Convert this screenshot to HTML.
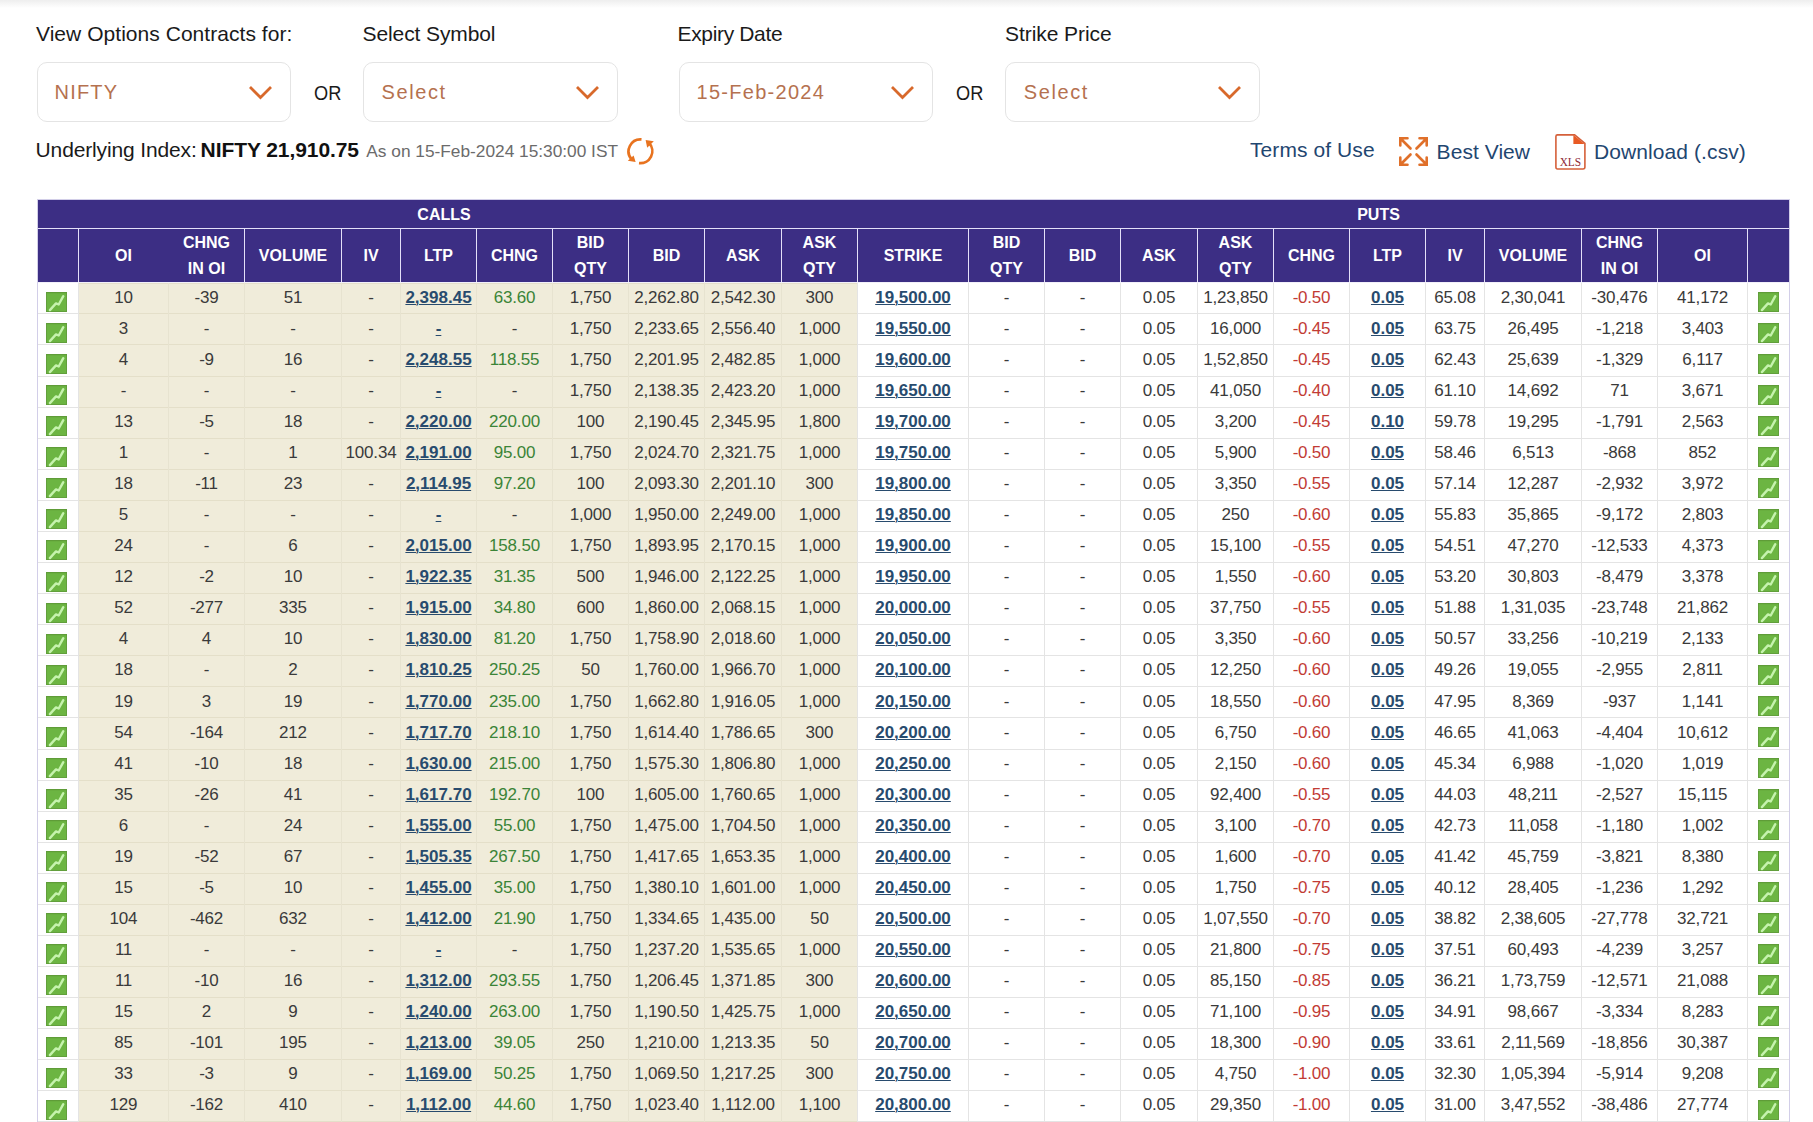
<!DOCTYPE html><html><head><meta charset="utf-8"><style>

html,body{margin:0;padding:0;background:#fff;}
body{width:1813px;height:1122px;overflow:hidden;position:relative;font-family:"Liberation Sans", sans-serif;color:#3a3a3a;}
.a{position:absolute;white-space:nowrap;}
.lbl{font-size:20px;color:#1a1a1a;line-height:24px;}
.sel{position:absolute;top:62px;width:254.5px;height:60px;box-sizing:border-box;border:1px solid #e4e4e4;border-radius:10px;background:#fff;}
.selt{position:absolute;left:18px;top:17px;font-size:21px;line-height:24px;color:#b86a45;}
.chev{position:absolute;top:24px;width:22px;height:14px;}
.c{position:absolute;text-align:center;font-size:17px;line-height:30px;white-space:nowrap;overflow:visible;letter-spacing:-0.2px;}
.h{position:absolute;text-align:center;font-size:16px;font-weight:bold;color:#fff;white-space:nowrap;line-height:26px;}
.lk{letter-spacing:0;color:#284b6e;font-weight:bold;text-decoration:underline;text-underline-offset:0.8px;text-decoration-thickness:1.2px;}
.g{color:#3b8437;}
.r{color:#c23b35;}
.ln{position:absolute;}

</style></head><body>
<div class="a" style="left:0;top:0;width:1813px;height:8px;background:linear-gradient(#eeeeee,#ffffff);"></div>
<div class="a" style="left:36px;top:22.2px;font-size:21px;line-height:24px;letter-spacing:0.04px;color:#1a1a1a;font-weight:normal;">View Options Contracts for:</div>
<div class="a" style="left:362.5px;top:22.2px;font-size:21px;line-height:24px;letter-spacing:-0.1px;color:#1a1a1a;font-weight:normal;">Select Symbol</div>
<div class="a" style="left:677.5px;top:22.2px;font-size:21px;line-height:24px;letter-spacing:-0.34px;color:#1a1a1a;font-weight:normal;">Expiry Date</div>
<div class="a" style="left:1005px;top:22.2px;font-size:21px;line-height:24px;letter-spacing:-0.06px;color:#1a1a1a;font-weight:normal;">Strike Price</div>
<div class="sel" style="left:36.5px;"></div>
<div class="a" style="left:54.6px;top:79.7px;font-size:20px;line-height:24px;letter-spacing:1.15px;color:#b5714f;font-weight:normal;">NIFTY</div>
<div class="a" style="left:246.0px;top:83.3px;width:30px;height:20px;"><svg width="30" height="20" viewBox="0 0 30 20"><polyline points="4,4 14.5,14.5 25,4" fill="none" stroke="#d8692b" stroke-width="2.8" stroke-linecap="butt" stroke-linejoin="miter"/></svg></div>
<div class="sel" style="left:363px;"></div>
<div class="a" style="left:381.5px;top:79.7px;font-size:20px;line-height:24px;letter-spacing:1.6px;color:#b5714f;font-weight:normal;">Select</div>
<div class="a" style="left:572.5px;top:83.3px;width:30px;height:20px;"><svg width="30" height="20" viewBox="0 0 30 20"><polyline points="4,4 14.5,14.5 25,4" fill="none" stroke="#d8692b" stroke-width="2.8" stroke-linecap="butt" stroke-linejoin="miter"/></svg></div>
<div class="sel" style="left:678.5px;"></div>
<div class="a" style="left:696.5px;top:79.7px;font-size:20px;line-height:24px;letter-spacing:1.28px;color:#b5714f;font-weight:normal;">15-Feb-2024</div>
<div class="a" style="left:888.0px;top:83.3px;width:30px;height:20px;"><svg width="30" height="20" viewBox="0 0 30 20"><polyline points="4,4 14.5,14.5 25,4" fill="none" stroke="#d8692b" stroke-width="2.8" stroke-linecap="butt" stroke-linejoin="miter"/></svg></div>
<div class="sel" style="left:1005px;"></div>
<div class="a" style="left:1023.8px;top:79.7px;font-size:20px;line-height:24px;letter-spacing:1.6px;color:#b5714f;font-weight:normal;">Select</div>
<div class="a" style="left:1214.5px;top:83.3px;width:30px;height:20px;"><svg width="30" height="20" viewBox="0 0 30 20"><polyline points="4,4 14.5,14.5 25,4" fill="none" stroke="#d8692b" stroke-width="2.8" stroke-linecap="butt" stroke-linejoin="miter"/></svg></div>
<div class="a" style="left:313.5px;top:81px;font-size:20px;line-height:24px;letter-spacing:0px;color:#1a1a1a;font-weight:normal;transform:scaleX(0.91);transform-origin:0 0;">OR</div>
<div class="a" style="left:956px;top:81px;font-size:20px;line-height:24px;letter-spacing:0px;color:#1a1a1a;font-weight:normal;transform:scaleX(0.91);transform-origin:0 0;">OR</div>
<div class="a" style="left:35.6px;top:138px;font-size:21px;line-height:24px;letter-spacing:-0.14px;color:#1a1a1a;font-weight:normal;">Underlying Index:</div>
<div class="a" style="left:200.6px;top:138px;font-size:21px;line-height:24px;letter-spacing:-0.08px;color:#111;font-weight:bold;">NIFTY 21,910.75</div>
<div class="a" style="left:366.3px;top:138.9px;font-size:17.3px;line-height:24px;letter-spacing:0px;color:#6b6b6b;font-weight:normal;">As on 15-Feb-2024 15:30:00 IST</div>
<svg class="a" style="left:627px;top:138px;" width="28" height="28" viewBox="0 0 28 28">
<g fill="none" stroke="#e8731f" stroke-width="2.7">
<path d="M14.5 1.4 A12 12 0 0 0 4.6 21.3"/>
<path d="M12 25.1 A12 12 0 0 0 22.1 5"/>
</g>
<polygon points="0.8,22.8 8.6,24 6.6,17.4" fill="#e8731f"/>
<polygon points="18.6,2 26.8,3.2 20.2,9.8" fill="#e8731f"/>
</svg>
<div class="a" style="left:1250px;top:137.5px;font-size:21px;line-height:24px;letter-spacing:0.08px;color:#1f4670;font-weight:normal;">Terms of Use</div>
<svg class="a" style="left:1399.4px;top:137.4px;" width="29" height="29" viewBox="0 0 29 29" fill="none" stroke="#e0702a" stroke-width="2.6" stroke-linecap="round">
<path d="M1.3 8.5 V1.3 H8.5"/><path d="M2.5 2.5 L11.5 11.5"/>
<path d="M20.5 1.3 H27.7 V8.5"/><path d="M26.5 2.5 L17.5 11.5"/>
<path d="M1.3 20.5 V27.7 H8.5"/><path d="M2.5 26.5 L11.5 17.5"/>
<path d="M20.5 27.7 H27.7 V20.5"/><path d="M26.5 26.5 L17.5 17.5"/>
<g fill="#e0702a" stroke="none"><polygon points="0,0 7,0 0,7"/><polygon points="29,0 22,0 29,7"/><polygon points="0,29 7,29 0,22"/><polygon points="29,29 22,29 29,22"/></g>
</svg>
<div class="a" style="left:1436.6px;top:139.9px;font-size:21px;line-height:24px;letter-spacing:0.05px;color:#1f4670;font-weight:normal;">Best View</div>
<svg class="a" style="left:1555px;top:134px;" width="31" height="36" viewBox="0 0 31 36">
<path d="M2.5 0.9 H19.6 L29.9 9.4 V33 Q29.9 35 28 35 H2.5 Q0.9 35 0.9 33 V2.5 Q0.9 0.9 2.5 0.9 Z" fill="#fff" stroke="#d5603a" stroke-width="1.6"/>
<path d="M18.4 1 V10 H29.6 Z" fill="#e85a24"/>
<text x="15.4" y="32" font-family="Liberation Serif" font-size="12" fill="#8e2a36" text-anchor="middle" textLength="21.5" lengthAdjust="spacingAndGlyphs">XLS</text>
</svg>
<div class="a" style="left:1593.9px;top:140.1px;font-size:21px;line-height:24px;letter-spacing:0.1px;color:#1f4670;font-weight:normal;">Download (.csv)</div>
<div class="a" style="left:37px;top:199px;width:1753px;height:923px;box-sizing:border-box;border:1px solid #d2cee8;border-bottom:none;"></div>
<div class="a" style="left:38px;top:200px;width:1751px;height:82px;background:#3c2e84;"></div>
<div class="a" style="left:38px;top:228px;width:1751px;height:1px;background:#e4e0f8;"></div>
<div class="a" style="left:38px;top:282px;width:1751px;height:1px;background:#f2f0fa;"></div>
<div class="a" style="left:78px;top:229px;width:1px;height:53px;background:#e4e0f8;"></div>
<div class="a" style="left:244px;top:229px;width:1px;height:53px;background:#e4e0f8;"></div>
<div class="a" style="left:341px;top:229px;width:1px;height:53px;background:#e4e0f8;"></div>
<div class="a" style="left:400px;top:229px;width:1px;height:53px;background:#e4e0f8;"></div>
<div class="a" style="left:476px;top:229px;width:1px;height:53px;background:#e4e0f8;"></div>
<div class="a" style="left:552px;top:229px;width:1px;height:53px;background:#e4e0f8;"></div>
<div class="a" style="left:628px;top:229px;width:1px;height:53px;background:#e4e0f8;"></div>
<div class="a" style="left:704px;top:229px;width:1px;height:53px;background:#e4e0f8;"></div>
<div class="a" style="left:781px;top:229px;width:1px;height:53px;background:#e4e0f8;"></div>
<div class="a" style="left:857px;top:229px;width:1px;height:53px;background:#e4e0f8;"></div>
<div class="a" style="left:968px;top:229px;width:1px;height:53px;background:#e4e0f8;"></div>
<div class="a" style="left:1044px;top:229px;width:1px;height:53px;background:#e4e0f8;"></div>
<div class="a" style="left:1120px;top:229px;width:1px;height:53px;background:#e4e0f8;"></div>
<div class="a" style="left:1197px;top:229px;width:1px;height:53px;background:#e4e0f8;"></div>
<div class="a" style="left:1273px;top:229px;width:1px;height:53px;background:#e4e0f8;"></div>
<div class="a" style="left:1349px;top:229px;width:1px;height:53px;background:#e4e0f8;"></div>
<div class="a" style="left:1425px;top:229px;width:1px;height:53px;background:#e4e0f8;"></div>
<div class="a" style="left:1484px;top:229px;width:1px;height:53px;background:#e4e0f8;"></div>
<div class="a" style="left:1581px;top:229px;width:1px;height:53px;background:#e4e0f8;"></div>
<div class="a" style="left:1657px;top:229px;width:1px;height:53px;background:#e4e0f8;"></div>
<div class="a" style="left:1747px;top:229px;width:1px;height:53px;background:#e4e0f8;"></div>
<div class="h" style="left:34px;width:820px;top:200.5px;line-height:28px;">CALLS</div>
<div class="h" style="left:968px;width:821px;top:200.5px;line-height:28px;">PUTS</div>
<div class="h" style="left:79px;width:89px;top:229px;line-height:53px;">OI</div>
<div class="h" style="left:169px;width:75px;top:230px;">CHNG<br>IN OI</div>
<div class="h" style="left:245px;width:96px;top:229px;line-height:53px;">VOLUME</div>
<div class="h" style="left:342px;width:58px;top:229px;line-height:53px;">IV</div>
<div class="h" style="left:401px;width:75px;top:229px;line-height:53px;">LTP</div>
<div class="h" style="left:477px;width:75px;top:229px;line-height:53px;">CHNG</div>
<div class="h" style="left:553px;width:75px;top:230px;">BID<br>QTY</div>
<div class="h" style="left:629px;width:75px;top:229px;line-height:53px;">BID</div>
<div class="h" style="left:705px;width:76px;top:229px;line-height:53px;">ASK</div>
<div class="h" style="left:782px;width:75px;top:230px;">ASK<br>QTY</div>
<div class="h" style="left:858px;width:110px;top:229px;line-height:53px;">STRIKE</div>
<div class="h" style="left:969px;width:75px;top:230px;">BID<br>QTY</div>
<div class="h" style="left:1045px;width:75px;top:229px;line-height:53px;">BID</div>
<div class="h" style="left:1121px;width:76px;top:229px;line-height:53px;">ASK</div>
<div class="h" style="left:1198px;width:75px;top:230px;">ASK<br>QTY</div>
<div class="h" style="left:1274px;width:75px;top:229px;line-height:53px;">CHNG</div>
<div class="h" style="left:1350px;width:75px;top:229px;line-height:53px;">LTP</div>
<div class="h" style="left:1426px;width:58px;top:229px;line-height:53px;">IV</div>
<div class="h" style="left:1485px;width:96px;top:229px;line-height:53px;">VOLUME</div>
<div class="h" style="left:1582px;width:75px;top:230px;">CHNG<br>IN OI</div>
<div class="h" style="left:1658px;width:89px;top:229px;line-height:53px;">OI</div>
<div class="a" style="left:79px;top:283px;width:778px;height:30px;background:#f0ecda;"></div>
<div class="a" style="left:38px;top:313px;width:41px;height:1px;background:#e4e4e4;"></div>
<div class="a" style="left:79px;top:313px;width:778px;height:1px;background:#e4dfc9;"></div>
<div class="a" style="left:857px;top:313px;width:932px;height:1px;background:#e4e4e4;"></div>
<div class="a" style="left:46px;top:292px;width:21px;height:20px;"><svg width="21" height="20" viewBox="0 0 21 20"><rect width="21" height="20" fill="#6cb542"/><rect x="0.5" y="0.5" width="20" height="19" fill="none" stroke="#629f3c" stroke-width="1"/><rect x="0" y="0" width="21" height="1.2" fill="#5f9c38"/><polyline points="3.9,18.1 6.8,14.9 10,11.4 12.7,12.5 17.3,4.2" fill="none" stroke="#c6f3ae" stroke-width="2.4" stroke-linejoin="round" stroke-linecap="round"/></svg></div>
<div class="a" style="left:1758px;top:292px;width:21px;height:20px;"><svg width="21" height="20" viewBox="0 0 21 20"><rect width="21" height="20" fill="#6cb542"/><rect x="0.5" y="0.5" width="20" height="19" fill="none" stroke="#629f3c" stroke-width="1"/><rect x="0" y="0" width="21" height="1.2" fill="#5f9c38"/><polyline points="3.9,18.1 6.8,14.9 10,11.4 12.7,12.5 17.3,4.2" fill="none" stroke="#c6f3ae" stroke-width="2.4" stroke-linejoin="round" stroke-linecap="round"/></svg></div>
<div class="c" style="left:79px;width:89px;top:283.0px;height:30px;line-height:30px;">10</div>
<div class="c" style="left:169px;width:75px;top:283.0px;height:30px;line-height:30px;">-39</div>
<div class="c" style="left:245px;width:96px;top:283.0px;height:30px;line-height:30px;">51</div>
<div class="c" style="left:342px;width:58px;top:283.0px;height:30px;line-height:30px;">-</div>
<div class="c" style="left:401px;width:75px;top:283.0px;height:30px;line-height:30px;"><span class="lk">2,398.45</span></div>
<div class="c" style="left:477px;width:75px;top:283.0px;height:30px;line-height:30px;"><span class="g">63.60</span></div>
<div class="c" style="left:553px;width:75px;top:283.0px;height:30px;line-height:30px;">1,750</div>
<div class="c" style="left:629px;width:75px;top:283.0px;height:30px;line-height:30px;">2,262.80</div>
<div class="c" style="left:705px;width:76px;top:283.0px;height:30px;line-height:30px;">2,542.30</div>
<div class="c" style="left:782px;width:75px;top:283.0px;height:30px;line-height:30px;">300</div>
<div class="c" style="left:858px;width:110px;top:283.0px;height:30px;line-height:30px;"><span class="lk">19,500.00</span></div>
<div class="c" style="left:969px;width:75px;top:283.0px;height:30px;line-height:30px;">-</div>
<div class="c" style="left:1045px;width:75px;top:283.0px;height:30px;line-height:30px;">-</div>
<div class="c" style="left:1121px;width:76px;top:283.0px;height:30px;line-height:30px;">0.05</div>
<div class="c" style="left:1198px;width:75px;top:283.0px;height:30px;line-height:30px;">1,23,850</div>
<div class="c" style="left:1274px;width:75px;top:283.0px;height:30px;line-height:30px;"><span class="r">-0.50</span></div>
<div class="c" style="left:1350px;width:75px;top:283.0px;height:30px;line-height:30px;"><span class="lk">0.05</span></div>
<div class="c" style="left:1426px;width:58px;top:283.0px;height:30px;line-height:30px;">65.08</div>
<div class="c" style="left:1485px;width:96px;top:283.0px;height:30px;line-height:30px;">2,30,041</div>
<div class="c" style="left:1582px;width:75px;top:283.0px;height:30px;line-height:30px;">-30,476</div>
<div class="c" style="left:1658px;width:89px;top:283.0px;height:30px;line-height:30px;">41,172</div>
<div class="a" style="left:79px;top:314px;width:778px;height:30px;background:#f0ecda;"></div>
<div class="a" style="left:38px;top:344px;width:41px;height:1px;background:#e4e4e4;"></div>
<div class="a" style="left:79px;top:344px;width:778px;height:1px;background:#e4dfc9;"></div>
<div class="a" style="left:857px;top:344px;width:932px;height:1px;background:#e4e4e4;"></div>
<div class="a" style="left:46px;top:323px;width:21px;height:20px;"><svg width="21" height="20" viewBox="0 0 21 20"><rect width="21" height="20" fill="#6cb542"/><rect x="0.5" y="0.5" width="20" height="19" fill="none" stroke="#629f3c" stroke-width="1"/><rect x="0" y="0" width="21" height="1.2" fill="#5f9c38"/><polyline points="3.9,18.1 6.8,14.9 10,11.4 12.7,12.5 17.3,4.2" fill="none" stroke="#c6f3ae" stroke-width="2.4" stroke-linejoin="round" stroke-linecap="round"/></svg></div>
<div class="a" style="left:1758px;top:323px;width:21px;height:20px;"><svg width="21" height="20" viewBox="0 0 21 20"><rect width="21" height="20" fill="#6cb542"/><rect x="0.5" y="0.5" width="20" height="19" fill="none" stroke="#629f3c" stroke-width="1"/><rect x="0" y="0" width="21" height="1.2" fill="#5f9c38"/><polyline points="3.9,18.1 6.8,14.9 10,11.4 12.7,12.5 17.3,4.2" fill="none" stroke="#c6f3ae" stroke-width="2.4" stroke-linejoin="round" stroke-linecap="round"/></svg></div>
<div class="c" style="left:79px;width:89px;top:314.04px;height:30px;line-height:30px;">3</div>
<div class="c" style="left:169px;width:75px;top:314.04px;height:30px;line-height:30px;">-</div>
<div class="c" style="left:245px;width:96px;top:314.04px;height:30px;line-height:30px;">-</div>
<div class="c" style="left:342px;width:58px;top:314.04px;height:30px;line-height:30px;">-</div>
<div class="c" style="left:401px;width:75px;top:314.04px;height:30px;line-height:30px;"><span class="lk">-</span></div>
<div class="c" style="left:477px;width:75px;top:314.04px;height:30px;line-height:30px;">-</div>
<div class="c" style="left:553px;width:75px;top:314.04px;height:30px;line-height:30px;">1,750</div>
<div class="c" style="left:629px;width:75px;top:314.04px;height:30px;line-height:30px;">2,233.65</div>
<div class="c" style="left:705px;width:76px;top:314.04px;height:30px;line-height:30px;">2,556.40</div>
<div class="c" style="left:782px;width:75px;top:314.04px;height:30px;line-height:30px;">1,000</div>
<div class="c" style="left:858px;width:110px;top:314.04px;height:30px;line-height:30px;"><span class="lk">19,550.00</span></div>
<div class="c" style="left:969px;width:75px;top:314.04px;height:30px;line-height:30px;">-</div>
<div class="c" style="left:1045px;width:75px;top:314.04px;height:30px;line-height:30px;">-</div>
<div class="c" style="left:1121px;width:76px;top:314.04px;height:30px;line-height:30px;">0.05</div>
<div class="c" style="left:1198px;width:75px;top:314.04px;height:30px;line-height:30px;">16,000</div>
<div class="c" style="left:1274px;width:75px;top:314.04px;height:30px;line-height:30px;"><span class="r">-0.45</span></div>
<div class="c" style="left:1350px;width:75px;top:314.04px;height:30px;line-height:30px;"><span class="lk">0.05</span></div>
<div class="c" style="left:1426px;width:58px;top:314.04px;height:30px;line-height:30px;">63.75</div>
<div class="c" style="left:1485px;width:96px;top:314.04px;height:30px;line-height:30px;">26,495</div>
<div class="c" style="left:1582px;width:75px;top:314.04px;height:30px;line-height:30px;">-1,218</div>
<div class="c" style="left:1658px;width:89px;top:314.04px;height:30px;line-height:30px;">3,403</div>
<div class="a" style="left:79px;top:345px;width:778px;height:31px;background:#f0ecda;"></div>
<div class="a" style="left:38px;top:376px;width:41px;height:1px;background:#e4e4e4;"></div>
<div class="a" style="left:79px;top:376px;width:778px;height:1px;background:#e4dfc9;"></div>
<div class="a" style="left:857px;top:376px;width:932px;height:1px;background:#e4e4e4;"></div>
<div class="a" style="left:46px;top:354px;width:21px;height:20px;"><svg width="21" height="20" viewBox="0 0 21 20"><rect width="21" height="20" fill="#6cb542"/><rect x="0.5" y="0.5" width="20" height="19" fill="none" stroke="#629f3c" stroke-width="1"/><rect x="0" y="0" width="21" height="1.2" fill="#5f9c38"/><polyline points="3.9,18.1 6.8,14.9 10,11.4 12.7,12.5 17.3,4.2" fill="none" stroke="#c6f3ae" stroke-width="2.4" stroke-linejoin="round" stroke-linecap="round"/></svg></div>
<div class="a" style="left:1758px;top:354px;width:21px;height:20px;"><svg width="21" height="20" viewBox="0 0 21 20"><rect width="21" height="20" fill="#6cb542"/><rect x="0.5" y="0.5" width="20" height="19" fill="none" stroke="#629f3c" stroke-width="1"/><rect x="0" y="0" width="21" height="1.2" fill="#5f9c38"/><polyline points="3.9,18.1 6.8,14.9 10,11.4 12.7,12.5 17.3,4.2" fill="none" stroke="#c6f3ae" stroke-width="2.4" stroke-linejoin="round" stroke-linecap="round"/></svg></div>
<div class="c" style="left:79px;width:89px;top:345.08px;height:30px;line-height:30px;">4</div>
<div class="c" style="left:169px;width:75px;top:345.08px;height:30px;line-height:30px;">-9</div>
<div class="c" style="left:245px;width:96px;top:345.08px;height:30px;line-height:30px;">16</div>
<div class="c" style="left:342px;width:58px;top:345.08px;height:30px;line-height:30px;">-</div>
<div class="c" style="left:401px;width:75px;top:345.08px;height:30px;line-height:30px;"><span class="lk">2,248.55</span></div>
<div class="c" style="left:477px;width:75px;top:345.08px;height:30px;line-height:30px;"><span class="g">118.55</span></div>
<div class="c" style="left:553px;width:75px;top:345.08px;height:30px;line-height:30px;">1,750</div>
<div class="c" style="left:629px;width:75px;top:345.08px;height:30px;line-height:30px;">2,201.95</div>
<div class="c" style="left:705px;width:76px;top:345.08px;height:30px;line-height:30px;">2,482.85</div>
<div class="c" style="left:782px;width:75px;top:345.08px;height:30px;line-height:30px;">1,000</div>
<div class="c" style="left:858px;width:110px;top:345.08px;height:30px;line-height:30px;"><span class="lk">19,600.00</span></div>
<div class="c" style="left:969px;width:75px;top:345.08px;height:30px;line-height:30px;">-</div>
<div class="c" style="left:1045px;width:75px;top:345.08px;height:30px;line-height:30px;">-</div>
<div class="c" style="left:1121px;width:76px;top:345.08px;height:30px;line-height:30px;">0.05</div>
<div class="c" style="left:1198px;width:75px;top:345.08px;height:30px;line-height:30px;">1,52,850</div>
<div class="c" style="left:1274px;width:75px;top:345.08px;height:30px;line-height:30px;"><span class="r">-0.45</span></div>
<div class="c" style="left:1350px;width:75px;top:345.08px;height:30px;line-height:30px;"><span class="lk">0.05</span></div>
<div class="c" style="left:1426px;width:58px;top:345.08px;height:30px;line-height:30px;">62.43</div>
<div class="c" style="left:1485px;width:96px;top:345.08px;height:30px;line-height:30px;">25,639</div>
<div class="c" style="left:1582px;width:75px;top:345.08px;height:30px;line-height:30px;">-1,329</div>
<div class="c" style="left:1658px;width:89px;top:345.08px;height:30px;line-height:30px;">6,117</div>
<div class="a" style="left:79px;top:377px;width:778px;height:30px;background:#f0ecda;"></div>
<div class="a" style="left:38px;top:407px;width:41px;height:1px;background:#e4e4e4;"></div>
<div class="a" style="left:79px;top:407px;width:778px;height:1px;background:#e4dfc9;"></div>
<div class="a" style="left:857px;top:407px;width:932px;height:1px;background:#e4e4e4;"></div>
<div class="a" style="left:46px;top:385px;width:21px;height:20px;"><svg width="21" height="20" viewBox="0 0 21 20"><rect width="21" height="20" fill="#6cb542"/><rect x="0.5" y="0.5" width="20" height="19" fill="none" stroke="#629f3c" stroke-width="1"/><rect x="0" y="0" width="21" height="1.2" fill="#5f9c38"/><polyline points="3.9,18.1 6.8,14.9 10,11.4 12.7,12.5 17.3,4.2" fill="none" stroke="#c6f3ae" stroke-width="2.4" stroke-linejoin="round" stroke-linecap="round"/></svg></div>
<div class="a" style="left:1758px;top:385px;width:21px;height:20px;"><svg width="21" height="20" viewBox="0 0 21 20"><rect width="21" height="20" fill="#6cb542"/><rect x="0.5" y="0.5" width="20" height="19" fill="none" stroke="#629f3c" stroke-width="1"/><rect x="0" y="0" width="21" height="1.2" fill="#5f9c38"/><polyline points="3.9,18.1 6.8,14.9 10,11.4 12.7,12.5 17.3,4.2" fill="none" stroke="#c6f3ae" stroke-width="2.4" stroke-linejoin="round" stroke-linecap="round"/></svg></div>
<div class="c" style="left:79px;width:89px;top:376.12px;height:30px;line-height:30px;">-</div>
<div class="c" style="left:169px;width:75px;top:376.12px;height:30px;line-height:30px;">-</div>
<div class="c" style="left:245px;width:96px;top:376.12px;height:30px;line-height:30px;">-</div>
<div class="c" style="left:342px;width:58px;top:376.12px;height:30px;line-height:30px;">-</div>
<div class="c" style="left:401px;width:75px;top:376.12px;height:30px;line-height:30px;"><span class="lk">-</span></div>
<div class="c" style="left:477px;width:75px;top:376.12px;height:30px;line-height:30px;">-</div>
<div class="c" style="left:553px;width:75px;top:376.12px;height:30px;line-height:30px;">1,750</div>
<div class="c" style="left:629px;width:75px;top:376.12px;height:30px;line-height:30px;">2,138.35</div>
<div class="c" style="left:705px;width:76px;top:376.12px;height:30px;line-height:30px;">2,423.20</div>
<div class="c" style="left:782px;width:75px;top:376.12px;height:30px;line-height:30px;">1,000</div>
<div class="c" style="left:858px;width:110px;top:376.12px;height:30px;line-height:30px;"><span class="lk">19,650.00</span></div>
<div class="c" style="left:969px;width:75px;top:376.12px;height:30px;line-height:30px;">-</div>
<div class="c" style="left:1045px;width:75px;top:376.12px;height:30px;line-height:30px;">-</div>
<div class="c" style="left:1121px;width:76px;top:376.12px;height:30px;line-height:30px;">0.05</div>
<div class="c" style="left:1198px;width:75px;top:376.12px;height:30px;line-height:30px;">41,050</div>
<div class="c" style="left:1274px;width:75px;top:376.12px;height:30px;line-height:30px;"><span class="r">-0.40</span></div>
<div class="c" style="left:1350px;width:75px;top:376.12px;height:30px;line-height:30px;"><span class="lk">0.05</span></div>
<div class="c" style="left:1426px;width:58px;top:376.12px;height:30px;line-height:30px;">61.10</div>
<div class="c" style="left:1485px;width:96px;top:376.12px;height:30px;line-height:30px;">14,692</div>
<div class="c" style="left:1582px;width:75px;top:376.12px;height:30px;line-height:30px;">71</div>
<div class="c" style="left:1658px;width:89px;top:376.12px;height:30px;line-height:30px;">3,671</div>
<div class="a" style="left:79px;top:408px;width:778px;height:30px;background:#f0ecda;"></div>
<div class="a" style="left:38px;top:438px;width:41px;height:1px;background:#e4e4e4;"></div>
<div class="a" style="left:79px;top:438px;width:778px;height:1px;background:#e4dfc9;"></div>
<div class="a" style="left:857px;top:438px;width:932px;height:1px;background:#e4e4e4;"></div>
<div class="a" style="left:46px;top:416px;width:21px;height:20px;"><svg width="21" height="20" viewBox="0 0 21 20"><rect width="21" height="20" fill="#6cb542"/><rect x="0.5" y="0.5" width="20" height="19" fill="none" stroke="#629f3c" stroke-width="1"/><rect x="0" y="0" width="21" height="1.2" fill="#5f9c38"/><polyline points="3.9,18.1 6.8,14.9 10,11.4 12.7,12.5 17.3,4.2" fill="none" stroke="#c6f3ae" stroke-width="2.4" stroke-linejoin="round" stroke-linecap="round"/></svg></div>
<div class="a" style="left:1758px;top:416px;width:21px;height:20px;"><svg width="21" height="20" viewBox="0 0 21 20"><rect width="21" height="20" fill="#6cb542"/><rect x="0.5" y="0.5" width="20" height="19" fill="none" stroke="#629f3c" stroke-width="1"/><rect x="0" y="0" width="21" height="1.2" fill="#5f9c38"/><polyline points="3.9,18.1 6.8,14.9 10,11.4 12.7,12.5 17.3,4.2" fill="none" stroke="#c6f3ae" stroke-width="2.4" stroke-linejoin="round" stroke-linecap="round"/></svg></div>
<div class="c" style="left:79px;width:89px;top:407.16px;height:30px;line-height:30px;">13</div>
<div class="c" style="left:169px;width:75px;top:407.16px;height:30px;line-height:30px;">-5</div>
<div class="c" style="left:245px;width:96px;top:407.16px;height:30px;line-height:30px;">18</div>
<div class="c" style="left:342px;width:58px;top:407.16px;height:30px;line-height:30px;">-</div>
<div class="c" style="left:401px;width:75px;top:407.16px;height:30px;line-height:30px;"><span class="lk">2,220.00</span></div>
<div class="c" style="left:477px;width:75px;top:407.16px;height:30px;line-height:30px;"><span class="g">220.00</span></div>
<div class="c" style="left:553px;width:75px;top:407.16px;height:30px;line-height:30px;">100</div>
<div class="c" style="left:629px;width:75px;top:407.16px;height:30px;line-height:30px;">2,190.45</div>
<div class="c" style="left:705px;width:76px;top:407.16px;height:30px;line-height:30px;">2,345.95</div>
<div class="c" style="left:782px;width:75px;top:407.16px;height:30px;line-height:30px;">1,800</div>
<div class="c" style="left:858px;width:110px;top:407.16px;height:30px;line-height:30px;"><span class="lk">19,700.00</span></div>
<div class="c" style="left:969px;width:75px;top:407.16px;height:30px;line-height:30px;">-</div>
<div class="c" style="left:1045px;width:75px;top:407.16px;height:30px;line-height:30px;">-</div>
<div class="c" style="left:1121px;width:76px;top:407.16px;height:30px;line-height:30px;">0.05</div>
<div class="c" style="left:1198px;width:75px;top:407.16px;height:30px;line-height:30px;">3,200</div>
<div class="c" style="left:1274px;width:75px;top:407.16px;height:30px;line-height:30px;"><span class="r">-0.45</span></div>
<div class="c" style="left:1350px;width:75px;top:407.16px;height:30px;line-height:30px;"><span class="lk">0.10</span></div>
<div class="c" style="left:1426px;width:58px;top:407.16px;height:30px;line-height:30px;">59.78</div>
<div class="c" style="left:1485px;width:96px;top:407.16px;height:30px;line-height:30px;">19,295</div>
<div class="c" style="left:1582px;width:75px;top:407.16px;height:30px;line-height:30px;">-1,791</div>
<div class="c" style="left:1658px;width:89px;top:407.16px;height:30px;line-height:30px;">2,563</div>
<div class="a" style="left:79px;top:439px;width:778px;height:30px;background:#f0ecda;"></div>
<div class="a" style="left:38px;top:469px;width:41px;height:1px;background:#e4e4e4;"></div>
<div class="a" style="left:79px;top:469px;width:778px;height:1px;background:#e4dfc9;"></div>
<div class="a" style="left:857px;top:469px;width:932px;height:1px;background:#e4e4e4;"></div>
<div class="a" style="left:46px;top:447px;width:21px;height:20px;"><svg width="21" height="20" viewBox="0 0 21 20"><rect width="21" height="20" fill="#6cb542"/><rect x="0.5" y="0.5" width="20" height="19" fill="none" stroke="#629f3c" stroke-width="1"/><rect x="0" y="0" width="21" height="1.2" fill="#5f9c38"/><polyline points="3.9,18.1 6.8,14.9 10,11.4 12.7,12.5 17.3,4.2" fill="none" stroke="#c6f3ae" stroke-width="2.4" stroke-linejoin="round" stroke-linecap="round"/></svg></div>
<div class="a" style="left:1758px;top:447px;width:21px;height:20px;"><svg width="21" height="20" viewBox="0 0 21 20"><rect width="21" height="20" fill="#6cb542"/><rect x="0.5" y="0.5" width="20" height="19" fill="none" stroke="#629f3c" stroke-width="1"/><rect x="0" y="0" width="21" height="1.2" fill="#5f9c38"/><polyline points="3.9,18.1 6.8,14.9 10,11.4 12.7,12.5 17.3,4.2" fill="none" stroke="#c6f3ae" stroke-width="2.4" stroke-linejoin="round" stroke-linecap="round"/></svg></div>
<div class="c" style="left:79px;width:89px;top:438.2px;height:30px;line-height:30px;">1</div>
<div class="c" style="left:169px;width:75px;top:438.2px;height:30px;line-height:30px;">-</div>
<div class="c" style="left:245px;width:96px;top:438.2px;height:30px;line-height:30px;">1</div>
<div class="c" style="left:342px;width:58px;top:438.2px;height:30px;line-height:30px;">100.34</div>
<div class="c" style="left:401px;width:75px;top:438.2px;height:30px;line-height:30px;"><span class="lk">2,191.00</span></div>
<div class="c" style="left:477px;width:75px;top:438.2px;height:30px;line-height:30px;"><span class="g">95.00</span></div>
<div class="c" style="left:553px;width:75px;top:438.2px;height:30px;line-height:30px;">1,750</div>
<div class="c" style="left:629px;width:75px;top:438.2px;height:30px;line-height:30px;">2,024.70</div>
<div class="c" style="left:705px;width:76px;top:438.2px;height:30px;line-height:30px;">2,321.75</div>
<div class="c" style="left:782px;width:75px;top:438.2px;height:30px;line-height:30px;">1,000</div>
<div class="c" style="left:858px;width:110px;top:438.2px;height:30px;line-height:30px;"><span class="lk">19,750.00</span></div>
<div class="c" style="left:969px;width:75px;top:438.2px;height:30px;line-height:30px;">-</div>
<div class="c" style="left:1045px;width:75px;top:438.2px;height:30px;line-height:30px;">-</div>
<div class="c" style="left:1121px;width:76px;top:438.2px;height:30px;line-height:30px;">0.05</div>
<div class="c" style="left:1198px;width:75px;top:438.2px;height:30px;line-height:30px;">5,900</div>
<div class="c" style="left:1274px;width:75px;top:438.2px;height:30px;line-height:30px;"><span class="r">-0.50</span></div>
<div class="c" style="left:1350px;width:75px;top:438.2px;height:30px;line-height:30px;"><span class="lk">0.05</span></div>
<div class="c" style="left:1426px;width:58px;top:438.2px;height:30px;line-height:30px;">58.46</div>
<div class="c" style="left:1485px;width:96px;top:438.2px;height:30px;line-height:30px;">6,513</div>
<div class="c" style="left:1582px;width:75px;top:438.2px;height:30px;line-height:30px;">-868</div>
<div class="c" style="left:1658px;width:89px;top:438.2px;height:30px;line-height:30px;">852</div>
<div class="a" style="left:79px;top:470px;width:778px;height:30px;background:#f0ecda;"></div>
<div class="a" style="left:38px;top:500px;width:41px;height:1px;background:#e4e4e4;"></div>
<div class="a" style="left:79px;top:500px;width:778px;height:1px;background:#e4dfc9;"></div>
<div class="a" style="left:857px;top:500px;width:932px;height:1px;background:#e4e4e4;"></div>
<div class="a" style="left:46px;top:478px;width:21px;height:20px;"><svg width="21" height="20" viewBox="0 0 21 20"><rect width="21" height="20" fill="#6cb542"/><rect x="0.5" y="0.5" width="20" height="19" fill="none" stroke="#629f3c" stroke-width="1"/><rect x="0" y="0" width="21" height="1.2" fill="#5f9c38"/><polyline points="3.9,18.1 6.8,14.9 10,11.4 12.7,12.5 17.3,4.2" fill="none" stroke="#c6f3ae" stroke-width="2.4" stroke-linejoin="round" stroke-linecap="round"/></svg></div>
<div class="a" style="left:1758px;top:478px;width:21px;height:20px;"><svg width="21" height="20" viewBox="0 0 21 20"><rect width="21" height="20" fill="#6cb542"/><rect x="0.5" y="0.5" width="20" height="19" fill="none" stroke="#629f3c" stroke-width="1"/><rect x="0" y="0" width="21" height="1.2" fill="#5f9c38"/><polyline points="3.9,18.1 6.8,14.9 10,11.4 12.7,12.5 17.3,4.2" fill="none" stroke="#c6f3ae" stroke-width="2.4" stroke-linejoin="round" stroke-linecap="round"/></svg></div>
<div class="c" style="left:79px;width:89px;top:469.24px;height:30px;line-height:30px;">18</div>
<div class="c" style="left:169px;width:75px;top:469.24px;height:30px;line-height:30px;">-11</div>
<div class="c" style="left:245px;width:96px;top:469.24px;height:30px;line-height:30px;">23</div>
<div class="c" style="left:342px;width:58px;top:469.24px;height:30px;line-height:30px;">-</div>
<div class="c" style="left:401px;width:75px;top:469.24px;height:30px;line-height:30px;"><span class="lk">2,114.95</span></div>
<div class="c" style="left:477px;width:75px;top:469.24px;height:30px;line-height:30px;"><span class="g">97.20</span></div>
<div class="c" style="left:553px;width:75px;top:469.24px;height:30px;line-height:30px;">100</div>
<div class="c" style="left:629px;width:75px;top:469.24px;height:30px;line-height:30px;">2,093.30</div>
<div class="c" style="left:705px;width:76px;top:469.24px;height:30px;line-height:30px;">2,201.10</div>
<div class="c" style="left:782px;width:75px;top:469.24px;height:30px;line-height:30px;">300</div>
<div class="c" style="left:858px;width:110px;top:469.24px;height:30px;line-height:30px;"><span class="lk">19,800.00</span></div>
<div class="c" style="left:969px;width:75px;top:469.24px;height:30px;line-height:30px;">-</div>
<div class="c" style="left:1045px;width:75px;top:469.24px;height:30px;line-height:30px;">-</div>
<div class="c" style="left:1121px;width:76px;top:469.24px;height:30px;line-height:30px;">0.05</div>
<div class="c" style="left:1198px;width:75px;top:469.24px;height:30px;line-height:30px;">3,350</div>
<div class="c" style="left:1274px;width:75px;top:469.24px;height:30px;line-height:30px;"><span class="r">-0.55</span></div>
<div class="c" style="left:1350px;width:75px;top:469.24px;height:30px;line-height:30px;"><span class="lk">0.05</span></div>
<div class="c" style="left:1426px;width:58px;top:469.24px;height:30px;line-height:30px;">57.14</div>
<div class="c" style="left:1485px;width:96px;top:469.24px;height:30px;line-height:30px;">12,287</div>
<div class="c" style="left:1582px;width:75px;top:469.24px;height:30px;line-height:30px;">-2,932</div>
<div class="c" style="left:1658px;width:89px;top:469.24px;height:30px;line-height:30px;">3,972</div>
<div class="a" style="left:79px;top:501px;width:778px;height:30px;background:#f0ecda;"></div>
<div class="a" style="left:38px;top:531px;width:41px;height:1px;background:#e4e4e4;"></div>
<div class="a" style="left:79px;top:531px;width:778px;height:1px;background:#e4dfc9;"></div>
<div class="a" style="left:857px;top:531px;width:932px;height:1px;background:#e4e4e4;"></div>
<div class="a" style="left:46px;top:509px;width:21px;height:20px;"><svg width="21" height="20" viewBox="0 0 21 20"><rect width="21" height="20" fill="#6cb542"/><rect x="0.5" y="0.5" width="20" height="19" fill="none" stroke="#629f3c" stroke-width="1"/><rect x="0" y="0" width="21" height="1.2" fill="#5f9c38"/><polyline points="3.9,18.1 6.8,14.9 10,11.4 12.7,12.5 17.3,4.2" fill="none" stroke="#c6f3ae" stroke-width="2.4" stroke-linejoin="round" stroke-linecap="round"/></svg></div>
<div class="a" style="left:1758px;top:509px;width:21px;height:20px;"><svg width="21" height="20" viewBox="0 0 21 20"><rect width="21" height="20" fill="#6cb542"/><rect x="0.5" y="0.5" width="20" height="19" fill="none" stroke="#629f3c" stroke-width="1"/><rect x="0" y="0" width="21" height="1.2" fill="#5f9c38"/><polyline points="3.9,18.1 6.8,14.9 10,11.4 12.7,12.5 17.3,4.2" fill="none" stroke="#c6f3ae" stroke-width="2.4" stroke-linejoin="round" stroke-linecap="round"/></svg></div>
<div class="c" style="left:79px;width:89px;top:500.28px;height:30px;line-height:30px;">5</div>
<div class="c" style="left:169px;width:75px;top:500.28px;height:30px;line-height:30px;">-</div>
<div class="c" style="left:245px;width:96px;top:500.28px;height:30px;line-height:30px;">-</div>
<div class="c" style="left:342px;width:58px;top:500.28px;height:30px;line-height:30px;">-</div>
<div class="c" style="left:401px;width:75px;top:500.28px;height:30px;line-height:30px;"><span class="lk">-</span></div>
<div class="c" style="left:477px;width:75px;top:500.28px;height:30px;line-height:30px;">-</div>
<div class="c" style="left:553px;width:75px;top:500.28px;height:30px;line-height:30px;">1,000</div>
<div class="c" style="left:629px;width:75px;top:500.28px;height:30px;line-height:30px;">1,950.00</div>
<div class="c" style="left:705px;width:76px;top:500.28px;height:30px;line-height:30px;">2,249.00</div>
<div class="c" style="left:782px;width:75px;top:500.28px;height:30px;line-height:30px;">1,000</div>
<div class="c" style="left:858px;width:110px;top:500.28px;height:30px;line-height:30px;"><span class="lk">19,850.00</span></div>
<div class="c" style="left:969px;width:75px;top:500.28px;height:30px;line-height:30px;">-</div>
<div class="c" style="left:1045px;width:75px;top:500.28px;height:30px;line-height:30px;">-</div>
<div class="c" style="left:1121px;width:76px;top:500.28px;height:30px;line-height:30px;">0.05</div>
<div class="c" style="left:1198px;width:75px;top:500.28px;height:30px;line-height:30px;">250</div>
<div class="c" style="left:1274px;width:75px;top:500.28px;height:30px;line-height:30px;"><span class="r">-0.60</span></div>
<div class="c" style="left:1350px;width:75px;top:500.28px;height:30px;line-height:30px;"><span class="lk">0.05</span></div>
<div class="c" style="left:1426px;width:58px;top:500.28px;height:30px;line-height:30px;">55.83</div>
<div class="c" style="left:1485px;width:96px;top:500.28px;height:30px;line-height:30px;">35,865</div>
<div class="c" style="left:1582px;width:75px;top:500.28px;height:30px;line-height:30px;">-9,172</div>
<div class="c" style="left:1658px;width:89px;top:500.28px;height:30px;line-height:30px;">2,803</div>
<div class="a" style="left:79px;top:532px;width:778px;height:30px;background:#f0ecda;"></div>
<div class="a" style="left:38px;top:562px;width:41px;height:1px;background:#e4e4e4;"></div>
<div class="a" style="left:79px;top:562px;width:778px;height:1px;background:#e4dfc9;"></div>
<div class="a" style="left:857px;top:562px;width:932px;height:1px;background:#e4e4e4;"></div>
<div class="a" style="left:46px;top:540px;width:21px;height:20px;"><svg width="21" height="20" viewBox="0 0 21 20"><rect width="21" height="20" fill="#6cb542"/><rect x="0.5" y="0.5" width="20" height="19" fill="none" stroke="#629f3c" stroke-width="1"/><rect x="0" y="0" width="21" height="1.2" fill="#5f9c38"/><polyline points="3.9,18.1 6.8,14.9 10,11.4 12.7,12.5 17.3,4.2" fill="none" stroke="#c6f3ae" stroke-width="2.4" stroke-linejoin="round" stroke-linecap="round"/></svg></div>
<div class="a" style="left:1758px;top:540px;width:21px;height:20px;"><svg width="21" height="20" viewBox="0 0 21 20"><rect width="21" height="20" fill="#6cb542"/><rect x="0.5" y="0.5" width="20" height="19" fill="none" stroke="#629f3c" stroke-width="1"/><rect x="0" y="0" width="21" height="1.2" fill="#5f9c38"/><polyline points="3.9,18.1 6.8,14.9 10,11.4 12.7,12.5 17.3,4.2" fill="none" stroke="#c6f3ae" stroke-width="2.4" stroke-linejoin="round" stroke-linecap="round"/></svg></div>
<div class="c" style="left:79px;width:89px;top:531.32px;height:30px;line-height:30px;">24</div>
<div class="c" style="left:169px;width:75px;top:531.32px;height:30px;line-height:30px;">-</div>
<div class="c" style="left:245px;width:96px;top:531.32px;height:30px;line-height:30px;">6</div>
<div class="c" style="left:342px;width:58px;top:531.32px;height:30px;line-height:30px;">-</div>
<div class="c" style="left:401px;width:75px;top:531.32px;height:30px;line-height:30px;"><span class="lk">2,015.00</span></div>
<div class="c" style="left:477px;width:75px;top:531.32px;height:30px;line-height:30px;"><span class="g">158.50</span></div>
<div class="c" style="left:553px;width:75px;top:531.32px;height:30px;line-height:30px;">1,750</div>
<div class="c" style="left:629px;width:75px;top:531.32px;height:30px;line-height:30px;">1,893.95</div>
<div class="c" style="left:705px;width:76px;top:531.32px;height:30px;line-height:30px;">2,170.15</div>
<div class="c" style="left:782px;width:75px;top:531.32px;height:30px;line-height:30px;">1,000</div>
<div class="c" style="left:858px;width:110px;top:531.32px;height:30px;line-height:30px;"><span class="lk">19,900.00</span></div>
<div class="c" style="left:969px;width:75px;top:531.32px;height:30px;line-height:30px;">-</div>
<div class="c" style="left:1045px;width:75px;top:531.32px;height:30px;line-height:30px;">-</div>
<div class="c" style="left:1121px;width:76px;top:531.32px;height:30px;line-height:30px;">0.05</div>
<div class="c" style="left:1198px;width:75px;top:531.32px;height:30px;line-height:30px;">15,100</div>
<div class="c" style="left:1274px;width:75px;top:531.32px;height:30px;line-height:30px;"><span class="r">-0.55</span></div>
<div class="c" style="left:1350px;width:75px;top:531.32px;height:30px;line-height:30px;"><span class="lk">0.05</span></div>
<div class="c" style="left:1426px;width:58px;top:531.32px;height:30px;line-height:30px;">54.51</div>
<div class="c" style="left:1485px;width:96px;top:531.32px;height:30px;line-height:30px;">47,270</div>
<div class="c" style="left:1582px;width:75px;top:531.32px;height:30px;line-height:30px;">-12,533</div>
<div class="c" style="left:1658px;width:89px;top:531.32px;height:30px;line-height:30px;">4,373</div>
<div class="a" style="left:79px;top:563px;width:778px;height:30px;background:#f0ecda;"></div>
<div class="a" style="left:38px;top:593px;width:41px;height:1px;background:#e4e4e4;"></div>
<div class="a" style="left:79px;top:593px;width:778px;height:1px;background:#e4dfc9;"></div>
<div class="a" style="left:857px;top:593px;width:932px;height:1px;background:#e4e4e4;"></div>
<div class="a" style="left:46px;top:572px;width:21px;height:20px;"><svg width="21" height="20" viewBox="0 0 21 20"><rect width="21" height="20" fill="#6cb542"/><rect x="0.5" y="0.5" width="20" height="19" fill="none" stroke="#629f3c" stroke-width="1"/><rect x="0" y="0" width="21" height="1.2" fill="#5f9c38"/><polyline points="3.9,18.1 6.8,14.9 10,11.4 12.7,12.5 17.3,4.2" fill="none" stroke="#c6f3ae" stroke-width="2.4" stroke-linejoin="round" stroke-linecap="round"/></svg></div>
<div class="a" style="left:1758px;top:572px;width:21px;height:20px;"><svg width="21" height="20" viewBox="0 0 21 20"><rect width="21" height="20" fill="#6cb542"/><rect x="0.5" y="0.5" width="20" height="19" fill="none" stroke="#629f3c" stroke-width="1"/><rect x="0" y="0" width="21" height="1.2" fill="#5f9c38"/><polyline points="3.9,18.1 6.8,14.9 10,11.4 12.7,12.5 17.3,4.2" fill="none" stroke="#c6f3ae" stroke-width="2.4" stroke-linejoin="round" stroke-linecap="round"/></svg></div>
<div class="c" style="left:79px;width:89px;top:562.36px;height:30px;line-height:30px;">12</div>
<div class="c" style="left:169px;width:75px;top:562.36px;height:30px;line-height:30px;">-2</div>
<div class="c" style="left:245px;width:96px;top:562.36px;height:30px;line-height:30px;">10</div>
<div class="c" style="left:342px;width:58px;top:562.36px;height:30px;line-height:30px;">-</div>
<div class="c" style="left:401px;width:75px;top:562.36px;height:30px;line-height:30px;"><span class="lk">1,922.35</span></div>
<div class="c" style="left:477px;width:75px;top:562.36px;height:30px;line-height:30px;"><span class="g">31.35</span></div>
<div class="c" style="left:553px;width:75px;top:562.36px;height:30px;line-height:30px;">500</div>
<div class="c" style="left:629px;width:75px;top:562.36px;height:30px;line-height:30px;">1,946.00</div>
<div class="c" style="left:705px;width:76px;top:562.36px;height:30px;line-height:30px;">2,122.25</div>
<div class="c" style="left:782px;width:75px;top:562.36px;height:30px;line-height:30px;">1,000</div>
<div class="c" style="left:858px;width:110px;top:562.36px;height:30px;line-height:30px;"><span class="lk">19,950.00</span></div>
<div class="c" style="left:969px;width:75px;top:562.36px;height:30px;line-height:30px;">-</div>
<div class="c" style="left:1045px;width:75px;top:562.36px;height:30px;line-height:30px;">-</div>
<div class="c" style="left:1121px;width:76px;top:562.36px;height:30px;line-height:30px;">0.05</div>
<div class="c" style="left:1198px;width:75px;top:562.36px;height:30px;line-height:30px;">1,550</div>
<div class="c" style="left:1274px;width:75px;top:562.36px;height:30px;line-height:30px;"><span class="r">-0.60</span></div>
<div class="c" style="left:1350px;width:75px;top:562.36px;height:30px;line-height:30px;"><span class="lk">0.05</span></div>
<div class="c" style="left:1426px;width:58px;top:562.36px;height:30px;line-height:30px;">53.20</div>
<div class="c" style="left:1485px;width:96px;top:562.36px;height:30px;line-height:30px;">30,803</div>
<div class="c" style="left:1582px;width:75px;top:562.36px;height:30px;line-height:30px;">-8,479</div>
<div class="c" style="left:1658px;width:89px;top:562.36px;height:30px;line-height:30px;">3,378</div>
<div class="a" style="left:79px;top:594px;width:778px;height:30px;background:#f0ecda;"></div>
<div class="a" style="left:38px;top:624px;width:41px;height:1px;background:#e4e4e4;"></div>
<div class="a" style="left:79px;top:624px;width:778px;height:1px;background:#e4dfc9;"></div>
<div class="a" style="left:857px;top:624px;width:932px;height:1px;background:#e4e4e4;"></div>
<div class="a" style="left:46px;top:603px;width:21px;height:20px;"><svg width="21" height="20" viewBox="0 0 21 20"><rect width="21" height="20" fill="#6cb542"/><rect x="0.5" y="0.5" width="20" height="19" fill="none" stroke="#629f3c" stroke-width="1"/><rect x="0" y="0" width="21" height="1.2" fill="#5f9c38"/><polyline points="3.9,18.1 6.8,14.9 10,11.4 12.7,12.5 17.3,4.2" fill="none" stroke="#c6f3ae" stroke-width="2.4" stroke-linejoin="round" stroke-linecap="round"/></svg></div>
<div class="a" style="left:1758px;top:603px;width:21px;height:20px;"><svg width="21" height="20" viewBox="0 0 21 20"><rect width="21" height="20" fill="#6cb542"/><rect x="0.5" y="0.5" width="20" height="19" fill="none" stroke="#629f3c" stroke-width="1"/><rect x="0" y="0" width="21" height="1.2" fill="#5f9c38"/><polyline points="3.9,18.1 6.8,14.9 10,11.4 12.7,12.5 17.3,4.2" fill="none" stroke="#c6f3ae" stroke-width="2.4" stroke-linejoin="round" stroke-linecap="round"/></svg></div>
<div class="c" style="left:79px;width:89px;top:593.4px;height:30px;line-height:30px;">52</div>
<div class="c" style="left:169px;width:75px;top:593.4px;height:30px;line-height:30px;">-277</div>
<div class="c" style="left:245px;width:96px;top:593.4px;height:30px;line-height:30px;">335</div>
<div class="c" style="left:342px;width:58px;top:593.4px;height:30px;line-height:30px;">-</div>
<div class="c" style="left:401px;width:75px;top:593.4px;height:30px;line-height:30px;"><span class="lk">1,915.00</span></div>
<div class="c" style="left:477px;width:75px;top:593.4px;height:30px;line-height:30px;"><span class="g">34.80</span></div>
<div class="c" style="left:553px;width:75px;top:593.4px;height:30px;line-height:30px;">600</div>
<div class="c" style="left:629px;width:75px;top:593.4px;height:30px;line-height:30px;">1,860.00</div>
<div class="c" style="left:705px;width:76px;top:593.4px;height:30px;line-height:30px;">2,068.15</div>
<div class="c" style="left:782px;width:75px;top:593.4px;height:30px;line-height:30px;">1,000</div>
<div class="c" style="left:858px;width:110px;top:593.4px;height:30px;line-height:30px;"><span class="lk">20,000.00</span></div>
<div class="c" style="left:969px;width:75px;top:593.4px;height:30px;line-height:30px;">-</div>
<div class="c" style="left:1045px;width:75px;top:593.4px;height:30px;line-height:30px;">-</div>
<div class="c" style="left:1121px;width:76px;top:593.4px;height:30px;line-height:30px;">0.05</div>
<div class="c" style="left:1198px;width:75px;top:593.4px;height:30px;line-height:30px;">37,750</div>
<div class="c" style="left:1274px;width:75px;top:593.4px;height:30px;line-height:30px;"><span class="r">-0.55</span></div>
<div class="c" style="left:1350px;width:75px;top:593.4px;height:30px;line-height:30px;"><span class="lk">0.05</span></div>
<div class="c" style="left:1426px;width:58px;top:593.4px;height:30px;line-height:30px;">51.88</div>
<div class="c" style="left:1485px;width:96px;top:593.4px;height:30px;line-height:30px;">1,31,035</div>
<div class="c" style="left:1582px;width:75px;top:593.4px;height:30px;line-height:30px;">-23,748</div>
<div class="c" style="left:1658px;width:89px;top:593.4px;height:30px;line-height:30px;">21,862</div>
<div class="a" style="left:79px;top:625px;width:778px;height:30px;background:#f0ecda;"></div>
<div class="a" style="left:38px;top:655px;width:41px;height:1px;background:#e4e4e4;"></div>
<div class="a" style="left:79px;top:655px;width:778px;height:1px;background:#e4dfc9;"></div>
<div class="a" style="left:857px;top:655px;width:932px;height:1px;background:#e4e4e4;"></div>
<div class="a" style="left:46px;top:634px;width:21px;height:20px;"><svg width="21" height="20" viewBox="0 0 21 20"><rect width="21" height="20" fill="#6cb542"/><rect x="0.5" y="0.5" width="20" height="19" fill="none" stroke="#629f3c" stroke-width="1"/><rect x="0" y="0" width="21" height="1.2" fill="#5f9c38"/><polyline points="3.9,18.1 6.8,14.9 10,11.4 12.7,12.5 17.3,4.2" fill="none" stroke="#c6f3ae" stroke-width="2.4" stroke-linejoin="round" stroke-linecap="round"/></svg></div>
<div class="a" style="left:1758px;top:634px;width:21px;height:20px;"><svg width="21" height="20" viewBox="0 0 21 20"><rect width="21" height="20" fill="#6cb542"/><rect x="0.5" y="0.5" width="20" height="19" fill="none" stroke="#629f3c" stroke-width="1"/><rect x="0" y="0" width="21" height="1.2" fill="#5f9c38"/><polyline points="3.9,18.1 6.8,14.9 10,11.4 12.7,12.5 17.3,4.2" fill="none" stroke="#c6f3ae" stroke-width="2.4" stroke-linejoin="round" stroke-linecap="round"/></svg></div>
<div class="c" style="left:79px;width:89px;top:624.44px;height:30px;line-height:30px;">4</div>
<div class="c" style="left:169px;width:75px;top:624.44px;height:30px;line-height:30px;">4</div>
<div class="c" style="left:245px;width:96px;top:624.44px;height:30px;line-height:30px;">10</div>
<div class="c" style="left:342px;width:58px;top:624.44px;height:30px;line-height:30px;">-</div>
<div class="c" style="left:401px;width:75px;top:624.44px;height:30px;line-height:30px;"><span class="lk">1,830.00</span></div>
<div class="c" style="left:477px;width:75px;top:624.44px;height:30px;line-height:30px;"><span class="g">81.20</span></div>
<div class="c" style="left:553px;width:75px;top:624.44px;height:30px;line-height:30px;">1,750</div>
<div class="c" style="left:629px;width:75px;top:624.44px;height:30px;line-height:30px;">1,758.90</div>
<div class="c" style="left:705px;width:76px;top:624.44px;height:30px;line-height:30px;">2,018.60</div>
<div class="c" style="left:782px;width:75px;top:624.44px;height:30px;line-height:30px;">1,000</div>
<div class="c" style="left:858px;width:110px;top:624.44px;height:30px;line-height:30px;"><span class="lk">20,050.00</span></div>
<div class="c" style="left:969px;width:75px;top:624.44px;height:30px;line-height:30px;">-</div>
<div class="c" style="left:1045px;width:75px;top:624.44px;height:30px;line-height:30px;">-</div>
<div class="c" style="left:1121px;width:76px;top:624.44px;height:30px;line-height:30px;">0.05</div>
<div class="c" style="left:1198px;width:75px;top:624.44px;height:30px;line-height:30px;">3,350</div>
<div class="c" style="left:1274px;width:75px;top:624.44px;height:30px;line-height:30px;"><span class="r">-0.60</span></div>
<div class="c" style="left:1350px;width:75px;top:624.44px;height:30px;line-height:30px;"><span class="lk">0.05</span></div>
<div class="c" style="left:1426px;width:58px;top:624.44px;height:30px;line-height:30px;">50.57</div>
<div class="c" style="left:1485px;width:96px;top:624.44px;height:30px;line-height:30px;">33,256</div>
<div class="c" style="left:1582px;width:75px;top:624.44px;height:30px;line-height:30px;">-10,219</div>
<div class="c" style="left:1658px;width:89px;top:624.44px;height:30px;line-height:30px;">2,133</div>
<div class="a" style="left:79px;top:656px;width:778px;height:30px;background:#f0ecda;"></div>
<div class="a" style="left:38px;top:686px;width:41px;height:1px;background:#e4e4e4;"></div>
<div class="a" style="left:79px;top:686px;width:778px;height:1px;background:#e4dfc9;"></div>
<div class="a" style="left:857px;top:686px;width:932px;height:1px;background:#e4e4e4;"></div>
<div class="a" style="left:46px;top:665px;width:21px;height:20px;"><svg width="21" height="20" viewBox="0 0 21 20"><rect width="21" height="20" fill="#6cb542"/><rect x="0.5" y="0.5" width="20" height="19" fill="none" stroke="#629f3c" stroke-width="1"/><rect x="0" y="0" width="21" height="1.2" fill="#5f9c38"/><polyline points="3.9,18.1 6.8,14.9 10,11.4 12.7,12.5 17.3,4.2" fill="none" stroke="#c6f3ae" stroke-width="2.4" stroke-linejoin="round" stroke-linecap="round"/></svg></div>
<div class="a" style="left:1758px;top:665px;width:21px;height:20px;"><svg width="21" height="20" viewBox="0 0 21 20"><rect width="21" height="20" fill="#6cb542"/><rect x="0.5" y="0.5" width="20" height="19" fill="none" stroke="#629f3c" stroke-width="1"/><rect x="0" y="0" width="21" height="1.2" fill="#5f9c38"/><polyline points="3.9,18.1 6.8,14.9 10,11.4 12.7,12.5 17.3,4.2" fill="none" stroke="#c6f3ae" stroke-width="2.4" stroke-linejoin="round" stroke-linecap="round"/></svg></div>
<div class="c" style="left:79px;width:89px;top:655.48px;height:30px;line-height:30px;">18</div>
<div class="c" style="left:169px;width:75px;top:655.48px;height:30px;line-height:30px;">-</div>
<div class="c" style="left:245px;width:96px;top:655.48px;height:30px;line-height:30px;">2</div>
<div class="c" style="left:342px;width:58px;top:655.48px;height:30px;line-height:30px;">-</div>
<div class="c" style="left:401px;width:75px;top:655.48px;height:30px;line-height:30px;"><span class="lk">1,810.25</span></div>
<div class="c" style="left:477px;width:75px;top:655.48px;height:30px;line-height:30px;"><span class="g">250.25</span></div>
<div class="c" style="left:553px;width:75px;top:655.48px;height:30px;line-height:30px;">50</div>
<div class="c" style="left:629px;width:75px;top:655.48px;height:30px;line-height:30px;">1,760.00</div>
<div class="c" style="left:705px;width:76px;top:655.48px;height:30px;line-height:30px;">1,966.70</div>
<div class="c" style="left:782px;width:75px;top:655.48px;height:30px;line-height:30px;">1,000</div>
<div class="c" style="left:858px;width:110px;top:655.48px;height:30px;line-height:30px;"><span class="lk">20,100.00</span></div>
<div class="c" style="left:969px;width:75px;top:655.48px;height:30px;line-height:30px;">-</div>
<div class="c" style="left:1045px;width:75px;top:655.48px;height:30px;line-height:30px;">-</div>
<div class="c" style="left:1121px;width:76px;top:655.48px;height:30px;line-height:30px;">0.05</div>
<div class="c" style="left:1198px;width:75px;top:655.48px;height:30px;line-height:30px;">12,250</div>
<div class="c" style="left:1274px;width:75px;top:655.48px;height:30px;line-height:30px;"><span class="r">-0.60</span></div>
<div class="c" style="left:1350px;width:75px;top:655.48px;height:30px;line-height:30px;"><span class="lk">0.05</span></div>
<div class="c" style="left:1426px;width:58px;top:655.48px;height:30px;line-height:30px;">49.26</div>
<div class="c" style="left:1485px;width:96px;top:655.48px;height:30px;line-height:30px;">19,055</div>
<div class="c" style="left:1582px;width:75px;top:655.48px;height:30px;line-height:30px;">-2,955</div>
<div class="c" style="left:1658px;width:89px;top:655.48px;height:30px;line-height:30px;">2,811</div>
<div class="a" style="left:79px;top:687px;width:778px;height:30px;background:#f0ecda;"></div>
<div class="a" style="left:38px;top:717px;width:41px;height:1px;background:#e4e4e4;"></div>
<div class="a" style="left:79px;top:717px;width:778px;height:1px;background:#e4dfc9;"></div>
<div class="a" style="left:857px;top:717px;width:932px;height:1px;background:#e4e4e4;"></div>
<div class="a" style="left:46px;top:696px;width:21px;height:20px;"><svg width="21" height="20" viewBox="0 0 21 20"><rect width="21" height="20" fill="#6cb542"/><rect x="0.5" y="0.5" width="20" height="19" fill="none" stroke="#629f3c" stroke-width="1"/><rect x="0" y="0" width="21" height="1.2" fill="#5f9c38"/><polyline points="3.9,18.1 6.8,14.9 10,11.4 12.7,12.5 17.3,4.2" fill="none" stroke="#c6f3ae" stroke-width="2.4" stroke-linejoin="round" stroke-linecap="round"/></svg></div>
<div class="a" style="left:1758px;top:696px;width:21px;height:20px;"><svg width="21" height="20" viewBox="0 0 21 20"><rect width="21" height="20" fill="#6cb542"/><rect x="0.5" y="0.5" width="20" height="19" fill="none" stroke="#629f3c" stroke-width="1"/><rect x="0" y="0" width="21" height="1.2" fill="#5f9c38"/><polyline points="3.9,18.1 6.8,14.9 10,11.4 12.7,12.5 17.3,4.2" fill="none" stroke="#c6f3ae" stroke-width="2.4" stroke-linejoin="round" stroke-linecap="round"/></svg></div>
<div class="c" style="left:79px;width:89px;top:686.52px;height:30px;line-height:30px;">19</div>
<div class="c" style="left:169px;width:75px;top:686.52px;height:30px;line-height:30px;">3</div>
<div class="c" style="left:245px;width:96px;top:686.52px;height:30px;line-height:30px;">19</div>
<div class="c" style="left:342px;width:58px;top:686.52px;height:30px;line-height:30px;">-</div>
<div class="c" style="left:401px;width:75px;top:686.52px;height:30px;line-height:30px;"><span class="lk">1,770.00</span></div>
<div class="c" style="left:477px;width:75px;top:686.52px;height:30px;line-height:30px;"><span class="g">235.00</span></div>
<div class="c" style="left:553px;width:75px;top:686.52px;height:30px;line-height:30px;">1,750</div>
<div class="c" style="left:629px;width:75px;top:686.52px;height:30px;line-height:30px;">1,662.80</div>
<div class="c" style="left:705px;width:76px;top:686.52px;height:30px;line-height:30px;">1,916.05</div>
<div class="c" style="left:782px;width:75px;top:686.52px;height:30px;line-height:30px;">1,000</div>
<div class="c" style="left:858px;width:110px;top:686.52px;height:30px;line-height:30px;"><span class="lk">20,150.00</span></div>
<div class="c" style="left:969px;width:75px;top:686.52px;height:30px;line-height:30px;">-</div>
<div class="c" style="left:1045px;width:75px;top:686.52px;height:30px;line-height:30px;">-</div>
<div class="c" style="left:1121px;width:76px;top:686.52px;height:30px;line-height:30px;">0.05</div>
<div class="c" style="left:1198px;width:75px;top:686.52px;height:30px;line-height:30px;">18,550</div>
<div class="c" style="left:1274px;width:75px;top:686.52px;height:30px;line-height:30px;"><span class="r">-0.60</span></div>
<div class="c" style="left:1350px;width:75px;top:686.52px;height:30px;line-height:30px;"><span class="lk">0.05</span></div>
<div class="c" style="left:1426px;width:58px;top:686.52px;height:30px;line-height:30px;">47.95</div>
<div class="c" style="left:1485px;width:96px;top:686.52px;height:30px;line-height:30px;">8,369</div>
<div class="c" style="left:1582px;width:75px;top:686.52px;height:30px;line-height:30px;">-937</div>
<div class="c" style="left:1658px;width:89px;top:686.52px;height:30px;line-height:30px;">1,141</div>
<div class="a" style="left:79px;top:718px;width:778px;height:31px;background:#f0ecda;"></div>
<div class="a" style="left:38px;top:749px;width:41px;height:1px;background:#e4e4e4;"></div>
<div class="a" style="left:79px;top:749px;width:778px;height:1px;background:#e4dfc9;"></div>
<div class="a" style="left:857px;top:749px;width:932px;height:1px;background:#e4e4e4;"></div>
<div class="a" style="left:46px;top:727px;width:21px;height:20px;"><svg width="21" height="20" viewBox="0 0 21 20"><rect width="21" height="20" fill="#6cb542"/><rect x="0.5" y="0.5" width="20" height="19" fill="none" stroke="#629f3c" stroke-width="1"/><rect x="0" y="0" width="21" height="1.2" fill="#5f9c38"/><polyline points="3.9,18.1 6.8,14.9 10,11.4 12.7,12.5 17.3,4.2" fill="none" stroke="#c6f3ae" stroke-width="2.4" stroke-linejoin="round" stroke-linecap="round"/></svg></div>
<div class="a" style="left:1758px;top:727px;width:21px;height:20px;"><svg width="21" height="20" viewBox="0 0 21 20"><rect width="21" height="20" fill="#6cb542"/><rect x="0.5" y="0.5" width="20" height="19" fill="none" stroke="#629f3c" stroke-width="1"/><rect x="0" y="0" width="21" height="1.2" fill="#5f9c38"/><polyline points="3.9,18.1 6.8,14.9 10,11.4 12.7,12.5 17.3,4.2" fill="none" stroke="#c6f3ae" stroke-width="2.4" stroke-linejoin="round" stroke-linecap="round"/></svg></div>
<div class="c" style="left:79px;width:89px;top:717.56px;height:30px;line-height:30px;">54</div>
<div class="c" style="left:169px;width:75px;top:717.56px;height:30px;line-height:30px;">-164</div>
<div class="c" style="left:245px;width:96px;top:717.56px;height:30px;line-height:30px;">212</div>
<div class="c" style="left:342px;width:58px;top:717.56px;height:30px;line-height:30px;">-</div>
<div class="c" style="left:401px;width:75px;top:717.56px;height:30px;line-height:30px;"><span class="lk">1,717.70</span></div>
<div class="c" style="left:477px;width:75px;top:717.56px;height:30px;line-height:30px;"><span class="g">218.10</span></div>
<div class="c" style="left:553px;width:75px;top:717.56px;height:30px;line-height:30px;">1,750</div>
<div class="c" style="left:629px;width:75px;top:717.56px;height:30px;line-height:30px;">1,614.40</div>
<div class="c" style="left:705px;width:76px;top:717.56px;height:30px;line-height:30px;">1,786.65</div>
<div class="c" style="left:782px;width:75px;top:717.56px;height:30px;line-height:30px;">300</div>
<div class="c" style="left:858px;width:110px;top:717.56px;height:30px;line-height:30px;"><span class="lk">20,200.00</span></div>
<div class="c" style="left:969px;width:75px;top:717.56px;height:30px;line-height:30px;">-</div>
<div class="c" style="left:1045px;width:75px;top:717.56px;height:30px;line-height:30px;">-</div>
<div class="c" style="left:1121px;width:76px;top:717.56px;height:30px;line-height:30px;">0.05</div>
<div class="c" style="left:1198px;width:75px;top:717.56px;height:30px;line-height:30px;">6,750</div>
<div class="c" style="left:1274px;width:75px;top:717.56px;height:30px;line-height:30px;"><span class="r">-0.60</span></div>
<div class="c" style="left:1350px;width:75px;top:717.56px;height:30px;line-height:30px;"><span class="lk">0.05</span></div>
<div class="c" style="left:1426px;width:58px;top:717.56px;height:30px;line-height:30px;">46.65</div>
<div class="c" style="left:1485px;width:96px;top:717.56px;height:30px;line-height:30px;">41,063</div>
<div class="c" style="left:1582px;width:75px;top:717.56px;height:30px;line-height:30px;">-4,404</div>
<div class="c" style="left:1658px;width:89px;top:717.56px;height:30px;line-height:30px;">10,612</div>
<div class="a" style="left:79px;top:750px;width:778px;height:30px;background:#f0ecda;"></div>
<div class="a" style="left:38px;top:780px;width:41px;height:1px;background:#e4e4e4;"></div>
<div class="a" style="left:79px;top:780px;width:778px;height:1px;background:#e4dfc9;"></div>
<div class="a" style="left:857px;top:780px;width:932px;height:1px;background:#e4e4e4;"></div>
<div class="a" style="left:46px;top:758px;width:21px;height:20px;"><svg width="21" height="20" viewBox="0 0 21 20"><rect width="21" height="20" fill="#6cb542"/><rect x="0.5" y="0.5" width="20" height="19" fill="none" stroke="#629f3c" stroke-width="1"/><rect x="0" y="0" width="21" height="1.2" fill="#5f9c38"/><polyline points="3.9,18.1 6.8,14.9 10,11.4 12.7,12.5 17.3,4.2" fill="none" stroke="#c6f3ae" stroke-width="2.4" stroke-linejoin="round" stroke-linecap="round"/></svg></div>
<div class="a" style="left:1758px;top:758px;width:21px;height:20px;"><svg width="21" height="20" viewBox="0 0 21 20"><rect width="21" height="20" fill="#6cb542"/><rect x="0.5" y="0.5" width="20" height="19" fill="none" stroke="#629f3c" stroke-width="1"/><rect x="0" y="0" width="21" height="1.2" fill="#5f9c38"/><polyline points="3.9,18.1 6.8,14.9 10,11.4 12.7,12.5 17.3,4.2" fill="none" stroke="#c6f3ae" stroke-width="2.4" stroke-linejoin="round" stroke-linecap="round"/></svg></div>
<div class="c" style="left:79px;width:89px;top:748.6px;height:30px;line-height:30px;">41</div>
<div class="c" style="left:169px;width:75px;top:748.6px;height:30px;line-height:30px;">-10</div>
<div class="c" style="left:245px;width:96px;top:748.6px;height:30px;line-height:30px;">18</div>
<div class="c" style="left:342px;width:58px;top:748.6px;height:30px;line-height:30px;">-</div>
<div class="c" style="left:401px;width:75px;top:748.6px;height:30px;line-height:30px;"><span class="lk">1,630.00</span></div>
<div class="c" style="left:477px;width:75px;top:748.6px;height:30px;line-height:30px;"><span class="g">215.00</span></div>
<div class="c" style="left:553px;width:75px;top:748.6px;height:30px;line-height:30px;">1,750</div>
<div class="c" style="left:629px;width:75px;top:748.6px;height:30px;line-height:30px;">1,575.30</div>
<div class="c" style="left:705px;width:76px;top:748.6px;height:30px;line-height:30px;">1,806.80</div>
<div class="c" style="left:782px;width:75px;top:748.6px;height:30px;line-height:30px;">1,000</div>
<div class="c" style="left:858px;width:110px;top:748.6px;height:30px;line-height:30px;"><span class="lk">20,250.00</span></div>
<div class="c" style="left:969px;width:75px;top:748.6px;height:30px;line-height:30px;">-</div>
<div class="c" style="left:1045px;width:75px;top:748.6px;height:30px;line-height:30px;">-</div>
<div class="c" style="left:1121px;width:76px;top:748.6px;height:30px;line-height:30px;">0.05</div>
<div class="c" style="left:1198px;width:75px;top:748.6px;height:30px;line-height:30px;">2,150</div>
<div class="c" style="left:1274px;width:75px;top:748.6px;height:30px;line-height:30px;"><span class="r">-0.60</span></div>
<div class="c" style="left:1350px;width:75px;top:748.6px;height:30px;line-height:30px;"><span class="lk">0.05</span></div>
<div class="c" style="left:1426px;width:58px;top:748.6px;height:30px;line-height:30px;">45.34</div>
<div class="c" style="left:1485px;width:96px;top:748.6px;height:30px;line-height:30px;">6,988</div>
<div class="c" style="left:1582px;width:75px;top:748.6px;height:30px;line-height:30px;">-1,020</div>
<div class="c" style="left:1658px;width:89px;top:748.6px;height:30px;line-height:30px;">1,019</div>
<div class="a" style="left:79px;top:781px;width:778px;height:30px;background:#f0ecda;"></div>
<div class="a" style="left:38px;top:811px;width:41px;height:1px;background:#e4e4e4;"></div>
<div class="a" style="left:79px;top:811px;width:778px;height:1px;background:#e4dfc9;"></div>
<div class="a" style="left:857px;top:811px;width:932px;height:1px;background:#e4e4e4;"></div>
<div class="a" style="left:46px;top:789px;width:21px;height:20px;"><svg width="21" height="20" viewBox="0 0 21 20"><rect width="21" height="20" fill="#6cb542"/><rect x="0.5" y="0.5" width="20" height="19" fill="none" stroke="#629f3c" stroke-width="1"/><rect x="0" y="0" width="21" height="1.2" fill="#5f9c38"/><polyline points="3.9,18.1 6.8,14.9 10,11.4 12.7,12.5 17.3,4.2" fill="none" stroke="#c6f3ae" stroke-width="2.4" stroke-linejoin="round" stroke-linecap="round"/></svg></div>
<div class="a" style="left:1758px;top:789px;width:21px;height:20px;"><svg width="21" height="20" viewBox="0 0 21 20"><rect width="21" height="20" fill="#6cb542"/><rect x="0.5" y="0.5" width="20" height="19" fill="none" stroke="#629f3c" stroke-width="1"/><rect x="0" y="0" width="21" height="1.2" fill="#5f9c38"/><polyline points="3.9,18.1 6.8,14.9 10,11.4 12.7,12.5 17.3,4.2" fill="none" stroke="#c6f3ae" stroke-width="2.4" stroke-linejoin="round" stroke-linecap="round"/></svg></div>
<div class="c" style="left:79px;width:89px;top:779.64px;height:30px;line-height:30px;">35</div>
<div class="c" style="left:169px;width:75px;top:779.64px;height:30px;line-height:30px;">-26</div>
<div class="c" style="left:245px;width:96px;top:779.64px;height:30px;line-height:30px;">41</div>
<div class="c" style="left:342px;width:58px;top:779.64px;height:30px;line-height:30px;">-</div>
<div class="c" style="left:401px;width:75px;top:779.64px;height:30px;line-height:30px;"><span class="lk">1,617.70</span></div>
<div class="c" style="left:477px;width:75px;top:779.64px;height:30px;line-height:30px;"><span class="g">192.70</span></div>
<div class="c" style="left:553px;width:75px;top:779.64px;height:30px;line-height:30px;">100</div>
<div class="c" style="left:629px;width:75px;top:779.64px;height:30px;line-height:30px;">1,605.00</div>
<div class="c" style="left:705px;width:76px;top:779.64px;height:30px;line-height:30px;">1,760.65</div>
<div class="c" style="left:782px;width:75px;top:779.64px;height:30px;line-height:30px;">1,000</div>
<div class="c" style="left:858px;width:110px;top:779.64px;height:30px;line-height:30px;"><span class="lk">20,300.00</span></div>
<div class="c" style="left:969px;width:75px;top:779.64px;height:30px;line-height:30px;">-</div>
<div class="c" style="left:1045px;width:75px;top:779.64px;height:30px;line-height:30px;">-</div>
<div class="c" style="left:1121px;width:76px;top:779.64px;height:30px;line-height:30px;">0.05</div>
<div class="c" style="left:1198px;width:75px;top:779.64px;height:30px;line-height:30px;">92,400</div>
<div class="c" style="left:1274px;width:75px;top:779.64px;height:30px;line-height:30px;"><span class="r">-0.55</span></div>
<div class="c" style="left:1350px;width:75px;top:779.64px;height:30px;line-height:30px;"><span class="lk">0.05</span></div>
<div class="c" style="left:1426px;width:58px;top:779.64px;height:30px;line-height:30px;">44.03</div>
<div class="c" style="left:1485px;width:96px;top:779.64px;height:30px;line-height:30px;">48,211</div>
<div class="c" style="left:1582px;width:75px;top:779.64px;height:30px;line-height:30px;">-2,527</div>
<div class="c" style="left:1658px;width:89px;top:779.64px;height:30px;line-height:30px;">15,115</div>
<div class="a" style="left:79px;top:812px;width:778px;height:30px;background:#f0ecda;"></div>
<div class="a" style="left:38px;top:842px;width:41px;height:1px;background:#e4e4e4;"></div>
<div class="a" style="left:79px;top:842px;width:778px;height:1px;background:#e4dfc9;"></div>
<div class="a" style="left:857px;top:842px;width:932px;height:1px;background:#e4e4e4;"></div>
<div class="a" style="left:46px;top:820px;width:21px;height:20px;"><svg width="21" height="20" viewBox="0 0 21 20"><rect width="21" height="20" fill="#6cb542"/><rect x="0.5" y="0.5" width="20" height="19" fill="none" stroke="#629f3c" stroke-width="1"/><rect x="0" y="0" width="21" height="1.2" fill="#5f9c38"/><polyline points="3.9,18.1 6.8,14.9 10,11.4 12.7,12.5 17.3,4.2" fill="none" stroke="#c6f3ae" stroke-width="2.4" stroke-linejoin="round" stroke-linecap="round"/></svg></div>
<div class="a" style="left:1758px;top:820px;width:21px;height:20px;"><svg width="21" height="20" viewBox="0 0 21 20"><rect width="21" height="20" fill="#6cb542"/><rect x="0.5" y="0.5" width="20" height="19" fill="none" stroke="#629f3c" stroke-width="1"/><rect x="0" y="0" width="21" height="1.2" fill="#5f9c38"/><polyline points="3.9,18.1 6.8,14.9 10,11.4 12.7,12.5 17.3,4.2" fill="none" stroke="#c6f3ae" stroke-width="2.4" stroke-linejoin="round" stroke-linecap="round"/></svg></div>
<div class="c" style="left:79px;width:89px;top:810.68px;height:30px;line-height:30px;">6</div>
<div class="c" style="left:169px;width:75px;top:810.68px;height:30px;line-height:30px;">-</div>
<div class="c" style="left:245px;width:96px;top:810.68px;height:30px;line-height:30px;">24</div>
<div class="c" style="left:342px;width:58px;top:810.68px;height:30px;line-height:30px;">-</div>
<div class="c" style="left:401px;width:75px;top:810.68px;height:30px;line-height:30px;"><span class="lk">1,555.00</span></div>
<div class="c" style="left:477px;width:75px;top:810.68px;height:30px;line-height:30px;"><span class="g">55.00</span></div>
<div class="c" style="left:553px;width:75px;top:810.68px;height:30px;line-height:30px;">1,750</div>
<div class="c" style="left:629px;width:75px;top:810.68px;height:30px;line-height:30px;">1,475.00</div>
<div class="c" style="left:705px;width:76px;top:810.68px;height:30px;line-height:30px;">1,704.50</div>
<div class="c" style="left:782px;width:75px;top:810.68px;height:30px;line-height:30px;">1,000</div>
<div class="c" style="left:858px;width:110px;top:810.68px;height:30px;line-height:30px;"><span class="lk">20,350.00</span></div>
<div class="c" style="left:969px;width:75px;top:810.68px;height:30px;line-height:30px;">-</div>
<div class="c" style="left:1045px;width:75px;top:810.68px;height:30px;line-height:30px;">-</div>
<div class="c" style="left:1121px;width:76px;top:810.68px;height:30px;line-height:30px;">0.05</div>
<div class="c" style="left:1198px;width:75px;top:810.68px;height:30px;line-height:30px;">3,100</div>
<div class="c" style="left:1274px;width:75px;top:810.68px;height:30px;line-height:30px;"><span class="r">-0.70</span></div>
<div class="c" style="left:1350px;width:75px;top:810.68px;height:30px;line-height:30px;"><span class="lk">0.05</span></div>
<div class="c" style="left:1426px;width:58px;top:810.68px;height:30px;line-height:30px;">42.73</div>
<div class="c" style="left:1485px;width:96px;top:810.68px;height:30px;line-height:30px;">11,058</div>
<div class="c" style="left:1582px;width:75px;top:810.68px;height:30px;line-height:30px;">-1,180</div>
<div class="c" style="left:1658px;width:89px;top:810.68px;height:30px;line-height:30px;">1,002</div>
<div class="a" style="left:79px;top:843px;width:778px;height:30px;background:#f0ecda;"></div>
<div class="a" style="left:38px;top:873px;width:41px;height:1px;background:#e4e4e4;"></div>
<div class="a" style="left:79px;top:873px;width:778px;height:1px;background:#e4dfc9;"></div>
<div class="a" style="left:857px;top:873px;width:932px;height:1px;background:#e4e4e4;"></div>
<div class="a" style="left:46px;top:851px;width:21px;height:20px;"><svg width="21" height="20" viewBox="0 0 21 20"><rect width="21" height="20" fill="#6cb542"/><rect x="0.5" y="0.5" width="20" height="19" fill="none" stroke="#629f3c" stroke-width="1"/><rect x="0" y="0" width="21" height="1.2" fill="#5f9c38"/><polyline points="3.9,18.1 6.8,14.9 10,11.4 12.7,12.5 17.3,4.2" fill="none" stroke="#c6f3ae" stroke-width="2.4" stroke-linejoin="round" stroke-linecap="round"/></svg></div>
<div class="a" style="left:1758px;top:851px;width:21px;height:20px;"><svg width="21" height="20" viewBox="0 0 21 20"><rect width="21" height="20" fill="#6cb542"/><rect x="0.5" y="0.5" width="20" height="19" fill="none" stroke="#629f3c" stroke-width="1"/><rect x="0" y="0" width="21" height="1.2" fill="#5f9c38"/><polyline points="3.9,18.1 6.8,14.9 10,11.4 12.7,12.5 17.3,4.2" fill="none" stroke="#c6f3ae" stroke-width="2.4" stroke-linejoin="round" stroke-linecap="round"/></svg></div>
<div class="c" style="left:79px;width:89px;top:841.72px;height:30px;line-height:30px;">19</div>
<div class="c" style="left:169px;width:75px;top:841.72px;height:30px;line-height:30px;">-52</div>
<div class="c" style="left:245px;width:96px;top:841.72px;height:30px;line-height:30px;">67</div>
<div class="c" style="left:342px;width:58px;top:841.72px;height:30px;line-height:30px;">-</div>
<div class="c" style="left:401px;width:75px;top:841.72px;height:30px;line-height:30px;"><span class="lk">1,505.35</span></div>
<div class="c" style="left:477px;width:75px;top:841.72px;height:30px;line-height:30px;"><span class="g">267.50</span></div>
<div class="c" style="left:553px;width:75px;top:841.72px;height:30px;line-height:30px;">1,750</div>
<div class="c" style="left:629px;width:75px;top:841.72px;height:30px;line-height:30px;">1,417.65</div>
<div class="c" style="left:705px;width:76px;top:841.72px;height:30px;line-height:30px;">1,653.35</div>
<div class="c" style="left:782px;width:75px;top:841.72px;height:30px;line-height:30px;">1,000</div>
<div class="c" style="left:858px;width:110px;top:841.72px;height:30px;line-height:30px;"><span class="lk">20,400.00</span></div>
<div class="c" style="left:969px;width:75px;top:841.72px;height:30px;line-height:30px;">-</div>
<div class="c" style="left:1045px;width:75px;top:841.72px;height:30px;line-height:30px;">-</div>
<div class="c" style="left:1121px;width:76px;top:841.72px;height:30px;line-height:30px;">0.05</div>
<div class="c" style="left:1198px;width:75px;top:841.72px;height:30px;line-height:30px;">1,600</div>
<div class="c" style="left:1274px;width:75px;top:841.72px;height:30px;line-height:30px;"><span class="r">-0.70</span></div>
<div class="c" style="left:1350px;width:75px;top:841.72px;height:30px;line-height:30px;"><span class="lk">0.05</span></div>
<div class="c" style="left:1426px;width:58px;top:841.72px;height:30px;line-height:30px;">41.42</div>
<div class="c" style="left:1485px;width:96px;top:841.72px;height:30px;line-height:30px;">45,759</div>
<div class="c" style="left:1582px;width:75px;top:841.72px;height:30px;line-height:30px;">-3,821</div>
<div class="c" style="left:1658px;width:89px;top:841.72px;height:30px;line-height:30px;">8,380</div>
<div class="a" style="left:79px;top:874px;width:778px;height:30px;background:#f0ecda;"></div>
<div class="a" style="left:38px;top:904px;width:41px;height:1px;background:#e4e4e4;"></div>
<div class="a" style="left:79px;top:904px;width:778px;height:1px;background:#e4dfc9;"></div>
<div class="a" style="left:857px;top:904px;width:932px;height:1px;background:#e4e4e4;"></div>
<div class="a" style="left:46px;top:882px;width:21px;height:20px;"><svg width="21" height="20" viewBox="0 0 21 20"><rect width="21" height="20" fill="#6cb542"/><rect x="0.5" y="0.5" width="20" height="19" fill="none" stroke="#629f3c" stroke-width="1"/><rect x="0" y="0" width="21" height="1.2" fill="#5f9c38"/><polyline points="3.9,18.1 6.8,14.9 10,11.4 12.7,12.5 17.3,4.2" fill="none" stroke="#c6f3ae" stroke-width="2.4" stroke-linejoin="round" stroke-linecap="round"/></svg></div>
<div class="a" style="left:1758px;top:882px;width:21px;height:20px;"><svg width="21" height="20" viewBox="0 0 21 20"><rect width="21" height="20" fill="#6cb542"/><rect x="0.5" y="0.5" width="20" height="19" fill="none" stroke="#629f3c" stroke-width="1"/><rect x="0" y="0" width="21" height="1.2" fill="#5f9c38"/><polyline points="3.9,18.1 6.8,14.9 10,11.4 12.7,12.5 17.3,4.2" fill="none" stroke="#c6f3ae" stroke-width="2.4" stroke-linejoin="round" stroke-linecap="round"/></svg></div>
<div class="c" style="left:79px;width:89px;top:872.76px;height:30px;line-height:30px;">15</div>
<div class="c" style="left:169px;width:75px;top:872.76px;height:30px;line-height:30px;">-5</div>
<div class="c" style="left:245px;width:96px;top:872.76px;height:30px;line-height:30px;">10</div>
<div class="c" style="left:342px;width:58px;top:872.76px;height:30px;line-height:30px;">-</div>
<div class="c" style="left:401px;width:75px;top:872.76px;height:30px;line-height:30px;"><span class="lk">1,455.00</span></div>
<div class="c" style="left:477px;width:75px;top:872.76px;height:30px;line-height:30px;"><span class="g">35.00</span></div>
<div class="c" style="left:553px;width:75px;top:872.76px;height:30px;line-height:30px;">1,750</div>
<div class="c" style="left:629px;width:75px;top:872.76px;height:30px;line-height:30px;">1,380.10</div>
<div class="c" style="left:705px;width:76px;top:872.76px;height:30px;line-height:30px;">1,601.00</div>
<div class="c" style="left:782px;width:75px;top:872.76px;height:30px;line-height:30px;">1,000</div>
<div class="c" style="left:858px;width:110px;top:872.76px;height:30px;line-height:30px;"><span class="lk">20,450.00</span></div>
<div class="c" style="left:969px;width:75px;top:872.76px;height:30px;line-height:30px;">-</div>
<div class="c" style="left:1045px;width:75px;top:872.76px;height:30px;line-height:30px;">-</div>
<div class="c" style="left:1121px;width:76px;top:872.76px;height:30px;line-height:30px;">0.05</div>
<div class="c" style="left:1198px;width:75px;top:872.76px;height:30px;line-height:30px;">1,750</div>
<div class="c" style="left:1274px;width:75px;top:872.76px;height:30px;line-height:30px;"><span class="r">-0.75</span></div>
<div class="c" style="left:1350px;width:75px;top:872.76px;height:30px;line-height:30px;"><span class="lk">0.05</span></div>
<div class="c" style="left:1426px;width:58px;top:872.76px;height:30px;line-height:30px;">40.12</div>
<div class="c" style="left:1485px;width:96px;top:872.76px;height:30px;line-height:30px;">28,405</div>
<div class="c" style="left:1582px;width:75px;top:872.76px;height:30px;line-height:30px;">-1,236</div>
<div class="c" style="left:1658px;width:89px;top:872.76px;height:30px;line-height:30px;">1,292</div>
<div class="a" style="left:79px;top:905px;width:778px;height:30px;background:#f0ecda;"></div>
<div class="a" style="left:38px;top:935px;width:41px;height:1px;background:#e4e4e4;"></div>
<div class="a" style="left:79px;top:935px;width:778px;height:1px;background:#e4dfc9;"></div>
<div class="a" style="left:857px;top:935px;width:932px;height:1px;background:#e4e4e4;"></div>
<div class="a" style="left:46px;top:913px;width:21px;height:20px;"><svg width="21" height="20" viewBox="0 0 21 20"><rect width="21" height="20" fill="#6cb542"/><rect x="0.5" y="0.5" width="20" height="19" fill="none" stroke="#629f3c" stroke-width="1"/><rect x="0" y="0" width="21" height="1.2" fill="#5f9c38"/><polyline points="3.9,18.1 6.8,14.9 10,11.4 12.7,12.5 17.3,4.2" fill="none" stroke="#c6f3ae" stroke-width="2.4" stroke-linejoin="round" stroke-linecap="round"/></svg></div>
<div class="a" style="left:1758px;top:913px;width:21px;height:20px;"><svg width="21" height="20" viewBox="0 0 21 20"><rect width="21" height="20" fill="#6cb542"/><rect x="0.5" y="0.5" width="20" height="19" fill="none" stroke="#629f3c" stroke-width="1"/><rect x="0" y="0" width="21" height="1.2" fill="#5f9c38"/><polyline points="3.9,18.1 6.8,14.9 10,11.4 12.7,12.5 17.3,4.2" fill="none" stroke="#c6f3ae" stroke-width="2.4" stroke-linejoin="round" stroke-linecap="round"/></svg></div>
<div class="c" style="left:79px;width:89px;top:903.8px;height:30px;line-height:30px;">104</div>
<div class="c" style="left:169px;width:75px;top:903.8px;height:30px;line-height:30px;">-462</div>
<div class="c" style="left:245px;width:96px;top:903.8px;height:30px;line-height:30px;">632</div>
<div class="c" style="left:342px;width:58px;top:903.8px;height:30px;line-height:30px;">-</div>
<div class="c" style="left:401px;width:75px;top:903.8px;height:30px;line-height:30px;"><span class="lk">1,412.00</span></div>
<div class="c" style="left:477px;width:75px;top:903.8px;height:30px;line-height:30px;"><span class="g">21.90</span></div>
<div class="c" style="left:553px;width:75px;top:903.8px;height:30px;line-height:30px;">1,750</div>
<div class="c" style="left:629px;width:75px;top:903.8px;height:30px;line-height:30px;">1,334.65</div>
<div class="c" style="left:705px;width:76px;top:903.8px;height:30px;line-height:30px;">1,435.00</div>
<div class="c" style="left:782px;width:75px;top:903.8px;height:30px;line-height:30px;">50</div>
<div class="c" style="left:858px;width:110px;top:903.8px;height:30px;line-height:30px;"><span class="lk">20,500.00</span></div>
<div class="c" style="left:969px;width:75px;top:903.8px;height:30px;line-height:30px;">-</div>
<div class="c" style="left:1045px;width:75px;top:903.8px;height:30px;line-height:30px;">-</div>
<div class="c" style="left:1121px;width:76px;top:903.8px;height:30px;line-height:30px;">0.05</div>
<div class="c" style="left:1198px;width:75px;top:903.8px;height:30px;line-height:30px;">1,07,550</div>
<div class="c" style="left:1274px;width:75px;top:903.8px;height:30px;line-height:30px;"><span class="r">-0.70</span></div>
<div class="c" style="left:1350px;width:75px;top:903.8px;height:30px;line-height:30px;"><span class="lk">0.05</span></div>
<div class="c" style="left:1426px;width:58px;top:903.8px;height:30px;line-height:30px;">38.82</div>
<div class="c" style="left:1485px;width:96px;top:903.8px;height:30px;line-height:30px;">2,38,605</div>
<div class="c" style="left:1582px;width:75px;top:903.8px;height:30px;line-height:30px;">-27,778</div>
<div class="c" style="left:1658px;width:89px;top:903.8px;height:30px;line-height:30px;">32,721</div>
<div class="a" style="left:79px;top:936px;width:778px;height:30px;background:#f0ecda;"></div>
<div class="a" style="left:38px;top:966px;width:41px;height:1px;background:#e4e4e4;"></div>
<div class="a" style="left:79px;top:966px;width:778px;height:1px;background:#e4dfc9;"></div>
<div class="a" style="left:857px;top:966px;width:932px;height:1px;background:#e4e4e4;"></div>
<div class="a" style="left:46px;top:944px;width:21px;height:20px;"><svg width="21" height="20" viewBox="0 0 21 20"><rect width="21" height="20" fill="#6cb542"/><rect x="0.5" y="0.5" width="20" height="19" fill="none" stroke="#629f3c" stroke-width="1"/><rect x="0" y="0" width="21" height="1.2" fill="#5f9c38"/><polyline points="3.9,18.1 6.8,14.9 10,11.4 12.7,12.5 17.3,4.2" fill="none" stroke="#c6f3ae" stroke-width="2.4" stroke-linejoin="round" stroke-linecap="round"/></svg></div>
<div class="a" style="left:1758px;top:944px;width:21px;height:20px;"><svg width="21" height="20" viewBox="0 0 21 20"><rect width="21" height="20" fill="#6cb542"/><rect x="0.5" y="0.5" width="20" height="19" fill="none" stroke="#629f3c" stroke-width="1"/><rect x="0" y="0" width="21" height="1.2" fill="#5f9c38"/><polyline points="3.9,18.1 6.8,14.9 10,11.4 12.7,12.5 17.3,4.2" fill="none" stroke="#c6f3ae" stroke-width="2.4" stroke-linejoin="round" stroke-linecap="round"/></svg></div>
<div class="c" style="left:79px;width:89px;top:934.84px;height:30px;line-height:30px;">11</div>
<div class="c" style="left:169px;width:75px;top:934.84px;height:30px;line-height:30px;">-</div>
<div class="c" style="left:245px;width:96px;top:934.84px;height:30px;line-height:30px;">-</div>
<div class="c" style="left:342px;width:58px;top:934.84px;height:30px;line-height:30px;">-</div>
<div class="c" style="left:401px;width:75px;top:934.84px;height:30px;line-height:30px;"><span class="lk">-</span></div>
<div class="c" style="left:477px;width:75px;top:934.84px;height:30px;line-height:30px;">-</div>
<div class="c" style="left:553px;width:75px;top:934.84px;height:30px;line-height:30px;">1,750</div>
<div class="c" style="left:629px;width:75px;top:934.84px;height:30px;line-height:30px;">1,237.20</div>
<div class="c" style="left:705px;width:76px;top:934.84px;height:30px;line-height:30px;">1,535.65</div>
<div class="c" style="left:782px;width:75px;top:934.84px;height:30px;line-height:30px;">1,000</div>
<div class="c" style="left:858px;width:110px;top:934.84px;height:30px;line-height:30px;"><span class="lk">20,550.00</span></div>
<div class="c" style="left:969px;width:75px;top:934.84px;height:30px;line-height:30px;">-</div>
<div class="c" style="left:1045px;width:75px;top:934.84px;height:30px;line-height:30px;">-</div>
<div class="c" style="left:1121px;width:76px;top:934.84px;height:30px;line-height:30px;">0.05</div>
<div class="c" style="left:1198px;width:75px;top:934.84px;height:30px;line-height:30px;">21,800</div>
<div class="c" style="left:1274px;width:75px;top:934.84px;height:30px;line-height:30px;"><span class="r">-0.75</span></div>
<div class="c" style="left:1350px;width:75px;top:934.84px;height:30px;line-height:30px;"><span class="lk">0.05</span></div>
<div class="c" style="left:1426px;width:58px;top:934.84px;height:30px;line-height:30px;">37.51</div>
<div class="c" style="left:1485px;width:96px;top:934.84px;height:30px;line-height:30px;">60,493</div>
<div class="c" style="left:1582px;width:75px;top:934.84px;height:30px;line-height:30px;">-4,239</div>
<div class="c" style="left:1658px;width:89px;top:934.84px;height:30px;line-height:30px;">3,257</div>
<div class="a" style="left:79px;top:967px;width:778px;height:30px;background:#f0ecda;"></div>
<div class="a" style="left:38px;top:997px;width:41px;height:1px;background:#e4e4e4;"></div>
<div class="a" style="left:79px;top:997px;width:778px;height:1px;background:#e4dfc9;"></div>
<div class="a" style="left:857px;top:997px;width:932px;height:1px;background:#e4e4e4;"></div>
<div class="a" style="left:46px;top:975px;width:21px;height:20px;"><svg width="21" height="20" viewBox="0 0 21 20"><rect width="21" height="20" fill="#6cb542"/><rect x="0.5" y="0.5" width="20" height="19" fill="none" stroke="#629f3c" stroke-width="1"/><rect x="0" y="0" width="21" height="1.2" fill="#5f9c38"/><polyline points="3.9,18.1 6.8,14.9 10,11.4 12.7,12.5 17.3,4.2" fill="none" stroke="#c6f3ae" stroke-width="2.4" stroke-linejoin="round" stroke-linecap="round"/></svg></div>
<div class="a" style="left:1758px;top:975px;width:21px;height:20px;"><svg width="21" height="20" viewBox="0 0 21 20"><rect width="21" height="20" fill="#6cb542"/><rect x="0.5" y="0.5" width="20" height="19" fill="none" stroke="#629f3c" stroke-width="1"/><rect x="0" y="0" width="21" height="1.2" fill="#5f9c38"/><polyline points="3.9,18.1 6.8,14.9 10,11.4 12.7,12.5 17.3,4.2" fill="none" stroke="#c6f3ae" stroke-width="2.4" stroke-linejoin="round" stroke-linecap="round"/></svg></div>
<div class="c" style="left:79px;width:89px;top:965.88px;height:30px;line-height:30px;">11</div>
<div class="c" style="left:169px;width:75px;top:965.88px;height:30px;line-height:30px;">-10</div>
<div class="c" style="left:245px;width:96px;top:965.88px;height:30px;line-height:30px;">16</div>
<div class="c" style="left:342px;width:58px;top:965.88px;height:30px;line-height:30px;">-</div>
<div class="c" style="left:401px;width:75px;top:965.88px;height:30px;line-height:30px;"><span class="lk">1,312.00</span></div>
<div class="c" style="left:477px;width:75px;top:965.88px;height:30px;line-height:30px;"><span class="g">293.55</span></div>
<div class="c" style="left:553px;width:75px;top:965.88px;height:30px;line-height:30px;">1,750</div>
<div class="c" style="left:629px;width:75px;top:965.88px;height:30px;line-height:30px;">1,206.45</div>
<div class="c" style="left:705px;width:76px;top:965.88px;height:30px;line-height:30px;">1,371.85</div>
<div class="c" style="left:782px;width:75px;top:965.88px;height:30px;line-height:30px;">300</div>
<div class="c" style="left:858px;width:110px;top:965.88px;height:30px;line-height:30px;"><span class="lk">20,600.00</span></div>
<div class="c" style="left:969px;width:75px;top:965.88px;height:30px;line-height:30px;">-</div>
<div class="c" style="left:1045px;width:75px;top:965.88px;height:30px;line-height:30px;">-</div>
<div class="c" style="left:1121px;width:76px;top:965.88px;height:30px;line-height:30px;">0.05</div>
<div class="c" style="left:1198px;width:75px;top:965.88px;height:30px;line-height:30px;">85,150</div>
<div class="c" style="left:1274px;width:75px;top:965.88px;height:30px;line-height:30px;"><span class="r">-0.85</span></div>
<div class="c" style="left:1350px;width:75px;top:965.88px;height:30px;line-height:30px;"><span class="lk">0.05</span></div>
<div class="c" style="left:1426px;width:58px;top:965.88px;height:30px;line-height:30px;">36.21</div>
<div class="c" style="left:1485px;width:96px;top:965.88px;height:30px;line-height:30px;">1,73,759</div>
<div class="c" style="left:1582px;width:75px;top:965.88px;height:30px;line-height:30px;">-12,571</div>
<div class="c" style="left:1658px;width:89px;top:965.88px;height:30px;line-height:30px;">21,088</div>
<div class="a" style="left:79px;top:998px;width:778px;height:30px;background:#f0ecda;"></div>
<div class="a" style="left:38px;top:1028px;width:41px;height:1px;background:#e4e4e4;"></div>
<div class="a" style="left:79px;top:1028px;width:778px;height:1px;background:#e4dfc9;"></div>
<div class="a" style="left:857px;top:1028px;width:932px;height:1px;background:#e4e4e4;"></div>
<div class="a" style="left:46px;top:1006px;width:21px;height:20px;"><svg width="21" height="20" viewBox="0 0 21 20"><rect width="21" height="20" fill="#6cb542"/><rect x="0.5" y="0.5" width="20" height="19" fill="none" stroke="#629f3c" stroke-width="1"/><rect x="0" y="0" width="21" height="1.2" fill="#5f9c38"/><polyline points="3.9,18.1 6.8,14.9 10,11.4 12.7,12.5 17.3,4.2" fill="none" stroke="#c6f3ae" stroke-width="2.4" stroke-linejoin="round" stroke-linecap="round"/></svg></div>
<div class="a" style="left:1758px;top:1006px;width:21px;height:20px;"><svg width="21" height="20" viewBox="0 0 21 20"><rect width="21" height="20" fill="#6cb542"/><rect x="0.5" y="0.5" width="20" height="19" fill="none" stroke="#629f3c" stroke-width="1"/><rect x="0" y="0" width="21" height="1.2" fill="#5f9c38"/><polyline points="3.9,18.1 6.8,14.9 10,11.4 12.7,12.5 17.3,4.2" fill="none" stroke="#c6f3ae" stroke-width="2.4" stroke-linejoin="round" stroke-linecap="round"/></svg></div>
<div class="c" style="left:79px;width:89px;top:996.92px;height:30px;line-height:30px;">15</div>
<div class="c" style="left:169px;width:75px;top:996.92px;height:30px;line-height:30px;">2</div>
<div class="c" style="left:245px;width:96px;top:996.92px;height:30px;line-height:30px;">9</div>
<div class="c" style="left:342px;width:58px;top:996.92px;height:30px;line-height:30px;">-</div>
<div class="c" style="left:401px;width:75px;top:996.92px;height:30px;line-height:30px;"><span class="lk">1,240.00</span></div>
<div class="c" style="left:477px;width:75px;top:996.92px;height:30px;line-height:30px;"><span class="g">263.00</span></div>
<div class="c" style="left:553px;width:75px;top:996.92px;height:30px;line-height:30px;">1,750</div>
<div class="c" style="left:629px;width:75px;top:996.92px;height:30px;line-height:30px;">1,190.50</div>
<div class="c" style="left:705px;width:76px;top:996.92px;height:30px;line-height:30px;">1,425.75</div>
<div class="c" style="left:782px;width:75px;top:996.92px;height:30px;line-height:30px;">1,000</div>
<div class="c" style="left:858px;width:110px;top:996.92px;height:30px;line-height:30px;"><span class="lk">20,650.00</span></div>
<div class="c" style="left:969px;width:75px;top:996.92px;height:30px;line-height:30px;">-</div>
<div class="c" style="left:1045px;width:75px;top:996.92px;height:30px;line-height:30px;">-</div>
<div class="c" style="left:1121px;width:76px;top:996.92px;height:30px;line-height:30px;">0.05</div>
<div class="c" style="left:1198px;width:75px;top:996.92px;height:30px;line-height:30px;">71,100</div>
<div class="c" style="left:1274px;width:75px;top:996.92px;height:30px;line-height:30px;"><span class="r">-0.95</span></div>
<div class="c" style="left:1350px;width:75px;top:996.92px;height:30px;line-height:30px;"><span class="lk">0.05</span></div>
<div class="c" style="left:1426px;width:58px;top:996.92px;height:30px;line-height:30px;">34.91</div>
<div class="c" style="left:1485px;width:96px;top:996.92px;height:30px;line-height:30px;">98,667</div>
<div class="c" style="left:1582px;width:75px;top:996.92px;height:30px;line-height:30px;">-3,334</div>
<div class="c" style="left:1658px;width:89px;top:996.92px;height:30px;line-height:30px;">8,283</div>
<div class="a" style="left:79px;top:1029px;width:778px;height:30px;background:#f0ecda;"></div>
<div class="a" style="left:38px;top:1059px;width:41px;height:1px;background:#e4e4e4;"></div>
<div class="a" style="left:79px;top:1059px;width:778px;height:1px;background:#e4dfc9;"></div>
<div class="a" style="left:857px;top:1059px;width:932px;height:1px;background:#e4e4e4;"></div>
<div class="a" style="left:46px;top:1037px;width:21px;height:20px;"><svg width="21" height="20" viewBox="0 0 21 20"><rect width="21" height="20" fill="#6cb542"/><rect x="0.5" y="0.5" width="20" height="19" fill="none" stroke="#629f3c" stroke-width="1"/><rect x="0" y="0" width="21" height="1.2" fill="#5f9c38"/><polyline points="3.9,18.1 6.8,14.9 10,11.4 12.7,12.5 17.3,4.2" fill="none" stroke="#c6f3ae" stroke-width="2.4" stroke-linejoin="round" stroke-linecap="round"/></svg></div>
<div class="a" style="left:1758px;top:1037px;width:21px;height:20px;"><svg width="21" height="20" viewBox="0 0 21 20"><rect width="21" height="20" fill="#6cb542"/><rect x="0.5" y="0.5" width="20" height="19" fill="none" stroke="#629f3c" stroke-width="1"/><rect x="0" y="0" width="21" height="1.2" fill="#5f9c38"/><polyline points="3.9,18.1 6.8,14.9 10,11.4 12.7,12.5 17.3,4.2" fill="none" stroke="#c6f3ae" stroke-width="2.4" stroke-linejoin="round" stroke-linecap="round"/></svg></div>
<div class="c" style="left:79px;width:89px;top:1027.96px;height:30px;line-height:30px;">85</div>
<div class="c" style="left:169px;width:75px;top:1027.96px;height:30px;line-height:30px;">-101</div>
<div class="c" style="left:245px;width:96px;top:1027.96px;height:30px;line-height:30px;">195</div>
<div class="c" style="left:342px;width:58px;top:1027.96px;height:30px;line-height:30px;">-</div>
<div class="c" style="left:401px;width:75px;top:1027.96px;height:30px;line-height:30px;"><span class="lk">1,213.00</span></div>
<div class="c" style="left:477px;width:75px;top:1027.96px;height:30px;line-height:30px;"><span class="g">39.05</span></div>
<div class="c" style="left:553px;width:75px;top:1027.96px;height:30px;line-height:30px;">250</div>
<div class="c" style="left:629px;width:75px;top:1027.96px;height:30px;line-height:30px;">1,210.00</div>
<div class="c" style="left:705px;width:76px;top:1027.96px;height:30px;line-height:30px;">1,213.35</div>
<div class="c" style="left:782px;width:75px;top:1027.96px;height:30px;line-height:30px;">50</div>
<div class="c" style="left:858px;width:110px;top:1027.96px;height:30px;line-height:30px;"><span class="lk">20,700.00</span></div>
<div class="c" style="left:969px;width:75px;top:1027.96px;height:30px;line-height:30px;">-</div>
<div class="c" style="left:1045px;width:75px;top:1027.96px;height:30px;line-height:30px;">-</div>
<div class="c" style="left:1121px;width:76px;top:1027.96px;height:30px;line-height:30px;">0.05</div>
<div class="c" style="left:1198px;width:75px;top:1027.96px;height:30px;line-height:30px;">18,300</div>
<div class="c" style="left:1274px;width:75px;top:1027.96px;height:30px;line-height:30px;"><span class="r">-0.90</span></div>
<div class="c" style="left:1350px;width:75px;top:1027.96px;height:30px;line-height:30px;"><span class="lk">0.05</span></div>
<div class="c" style="left:1426px;width:58px;top:1027.96px;height:30px;line-height:30px;">33.61</div>
<div class="c" style="left:1485px;width:96px;top:1027.96px;height:30px;line-height:30px;">2,11,569</div>
<div class="c" style="left:1582px;width:75px;top:1027.96px;height:30px;line-height:30px;">-18,856</div>
<div class="c" style="left:1658px;width:89px;top:1027.96px;height:30px;line-height:30px;">30,387</div>
<div class="a" style="left:79px;top:1060px;width:778px;height:30px;background:#f0ecda;"></div>
<div class="a" style="left:38px;top:1090px;width:41px;height:1px;background:#e4e4e4;"></div>
<div class="a" style="left:79px;top:1090px;width:778px;height:1px;background:#e4dfc9;"></div>
<div class="a" style="left:857px;top:1090px;width:932px;height:1px;background:#e4e4e4;"></div>
<div class="a" style="left:46px;top:1068px;width:21px;height:20px;"><svg width="21" height="20" viewBox="0 0 21 20"><rect width="21" height="20" fill="#6cb542"/><rect x="0.5" y="0.5" width="20" height="19" fill="none" stroke="#629f3c" stroke-width="1"/><rect x="0" y="0" width="21" height="1.2" fill="#5f9c38"/><polyline points="3.9,18.1 6.8,14.9 10,11.4 12.7,12.5 17.3,4.2" fill="none" stroke="#c6f3ae" stroke-width="2.4" stroke-linejoin="round" stroke-linecap="round"/></svg></div>
<div class="a" style="left:1758px;top:1068px;width:21px;height:20px;"><svg width="21" height="20" viewBox="0 0 21 20"><rect width="21" height="20" fill="#6cb542"/><rect x="0.5" y="0.5" width="20" height="19" fill="none" stroke="#629f3c" stroke-width="1"/><rect x="0" y="0" width="21" height="1.2" fill="#5f9c38"/><polyline points="3.9,18.1 6.8,14.9 10,11.4 12.7,12.5 17.3,4.2" fill="none" stroke="#c6f3ae" stroke-width="2.4" stroke-linejoin="round" stroke-linecap="round"/></svg></div>
<div class="c" style="left:79px;width:89px;top:1059.0px;height:30px;line-height:30px;">33</div>
<div class="c" style="left:169px;width:75px;top:1059.0px;height:30px;line-height:30px;">-3</div>
<div class="c" style="left:245px;width:96px;top:1059.0px;height:30px;line-height:30px;">9</div>
<div class="c" style="left:342px;width:58px;top:1059.0px;height:30px;line-height:30px;">-</div>
<div class="c" style="left:401px;width:75px;top:1059.0px;height:30px;line-height:30px;"><span class="lk">1,169.00</span></div>
<div class="c" style="left:477px;width:75px;top:1059.0px;height:30px;line-height:30px;"><span class="g">50.25</span></div>
<div class="c" style="left:553px;width:75px;top:1059.0px;height:30px;line-height:30px;">1,750</div>
<div class="c" style="left:629px;width:75px;top:1059.0px;height:30px;line-height:30px;">1,069.50</div>
<div class="c" style="left:705px;width:76px;top:1059.0px;height:30px;line-height:30px;">1,217.25</div>
<div class="c" style="left:782px;width:75px;top:1059.0px;height:30px;line-height:30px;">300</div>
<div class="c" style="left:858px;width:110px;top:1059.0px;height:30px;line-height:30px;"><span class="lk">20,750.00</span></div>
<div class="c" style="left:969px;width:75px;top:1059.0px;height:30px;line-height:30px;">-</div>
<div class="c" style="left:1045px;width:75px;top:1059.0px;height:30px;line-height:30px;">-</div>
<div class="c" style="left:1121px;width:76px;top:1059.0px;height:30px;line-height:30px;">0.05</div>
<div class="c" style="left:1198px;width:75px;top:1059.0px;height:30px;line-height:30px;">4,750</div>
<div class="c" style="left:1274px;width:75px;top:1059.0px;height:30px;line-height:30px;"><span class="r">-1.00</span></div>
<div class="c" style="left:1350px;width:75px;top:1059.0px;height:30px;line-height:30px;"><span class="lk">0.05</span></div>
<div class="c" style="left:1426px;width:58px;top:1059.0px;height:30px;line-height:30px;">32.30</div>
<div class="c" style="left:1485px;width:96px;top:1059.0px;height:30px;line-height:30px;">1,05,394</div>
<div class="c" style="left:1582px;width:75px;top:1059.0px;height:30px;line-height:30px;">-5,914</div>
<div class="c" style="left:1658px;width:89px;top:1059.0px;height:30px;line-height:30px;">9,208</div>
<div class="a" style="left:79px;top:1091px;width:778px;height:30px;background:#f0ecda;"></div>
<div class="a" style="left:38px;top:1121px;width:41px;height:1px;background:#e4e4e4;"></div>
<div class="a" style="left:79px;top:1121px;width:778px;height:1px;background:#e4dfc9;"></div>
<div class="a" style="left:857px;top:1121px;width:932px;height:1px;background:#e4e4e4;"></div>
<div class="a" style="left:46px;top:1100px;width:21px;height:20px;"><svg width="21" height="20" viewBox="0 0 21 20"><rect width="21" height="20" fill="#6cb542"/><rect x="0.5" y="0.5" width="20" height="19" fill="none" stroke="#629f3c" stroke-width="1"/><rect x="0" y="0" width="21" height="1.2" fill="#5f9c38"/><polyline points="3.9,18.1 6.8,14.9 10,11.4 12.7,12.5 17.3,4.2" fill="none" stroke="#c6f3ae" stroke-width="2.4" stroke-linejoin="round" stroke-linecap="round"/></svg></div>
<div class="a" style="left:1758px;top:1100px;width:21px;height:20px;"><svg width="21" height="20" viewBox="0 0 21 20"><rect width="21" height="20" fill="#6cb542"/><rect x="0.5" y="0.5" width="20" height="19" fill="none" stroke="#629f3c" stroke-width="1"/><rect x="0" y="0" width="21" height="1.2" fill="#5f9c38"/><polyline points="3.9,18.1 6.8,14.9 10,11.4 12.7,12.5 17.3,4.2" fill="none" stroke="#c6f3ae" stroke-width="2.4" stroke-linejoin="round" stroke-linecap="round"/></svg></div>
<div class="c" style="left:79px;width:89px;top:1090.04px;height:30px;line-height:30px;">129</div>
<div class="c" style="left:169px;width:75px;top:1090.04px;height:30px;line-height:30px;">-162</div>
<div class="c" style="left:245px;width:96px;top:1090.04px;height:30px;line-height:30px;">410</div>
<div class="c" style="left:342px;width:58px;top:1090.04px;height:30px;line-height:30px;">-</div>
<div class="c" style="left:401px;width:75px;top:1090.04px;height:30px;line-height:30px;"><span class="lk">1,112.00</span></div>
<div class="c" style="left:477px;width:75px;top:1090.04px;height:30px;line-height:30px;"><span class="g">44.60</span></div>
<div class="c" style="left:553px;width:75px;top:1090.04px;height:30px;line-height:30px;">1,750</div>
<div class="c" style="left:629px;width:75px;top:1090.04px;height:30px;line-height:30px;">1,023.40</div>
<div class="c" style="left:705px;width:76px;top:1090.04px;height:30px;line-height:30px;">1,112.00</div>
<div class="c" style="left:782px;width:75px;top:1090.04px;height:30px;line-height:30px;">1,100</div>
<div class="c" style="left:858px;width:110px;top:1090.04px;height:30px;line-height:30px;"><span class="lk">20,800.00</span></div>
<div class="c" style="left:969px;width:75px;top:1090.04px;height:30px;line-height:30px;">-</div>
<div class="c" style="left:1045px;width:75px;top:1090.04px;height:30px;line-height:30px;">-</div>
<div class="c" style="left:1121px;width:76px;top:1090.04px;height:30px;line-height:30px;">0.05</div>
<div class="c" style="left:1198px;width:75px;top:1090.04px;height:30px;line-height:30px;">29,350</div>
<div class="c" style="left:1274px;width:75px;top:1090.04px;height:30px;line-height:30px;"><span class="r">-1.00</span></div>
<div class="c" style="left:1350px;width:75px;top:1090.04px;height:30px;line-height:30px;"><span class="lk">0.05</span></div>
<div class="c" style="left:1426px;width:58px;top:1090.04px;height:30px;line-height:30px;">31.00</div>
<div class="c" style="left:1485px;width:96px;top:1090.04px;height:30px;line-height:30px;">3,47,552</div>
<div class="c" style="left:1582px;width:75px;top:1090.04px;height:30px;line-height:30px;">-38,486</div>
<div class="c" style="left:1658px;width:89px;top:1090.04px;height:30px;line-height:30px;">27,774</div>
<div class="a" style="left:79px;top:283px;width:778px;height:1px;background:#e4dfc9;"></div>
<div class="a" style="left:78px;top:283px;width:1px;height:839px;background:#e4e4e4;"></div>
<div class="a" style="left:168px;top:283px;width:1px;height:839px;background:#e7e3d0;"></div>
<div class="a" style="left:244px;top:283px;width:1px;height:839px;background:#e7e3d0;"></div>
<div class="a" style="left:341px;top:283px;width:1px;height:839px;background:#e7e3d0;"></div>
<div class="a" style="left:400px;top:283px;width:1px;height:839px;background:#e7e3d0;"></div>
<div class="a" style="left:476px;top:283px;width:1px;height:839px;background:#e7e3d0;"></div>
<div class="a" style="left:552px;top:283px;width:1px;height:839px;background:#e7e3d0;"></div>
<div class="a" style="left:628px;top:283px;width:1px;height:839px;background:#e7e3d0;"></div>
<div class="a" style="left:704px;top:283px;width:1px;height:839px;background:#e7e3d0;"></div>
<div class="a" style="left:781px;top:283px;width:1px;height:839px;background:#e7e3d0;"></div>
<div class="a" style="left:857px;top:283px;width:1px;height:839px;background:#e4e4e4;"></div>
<div class="a" style="left:968px;top:283px;width:1px;height:839px;background:#e4e4e4;"></div>
<div class="a" style="left:1044px;top:283px;width:1px;height:839px;background:#e4e4e4;"></div>
<div class="a" style="left:1120px;top:283px;width:1px;height:839px;background:#e4e4e4;"></div>
<div class="a" style="left:1197px;top:283px;width:1px;height:839px;background:#e4e4e4;"></div>
<div class="a" style="left:1273px;top:283px;width:1px;height:839px;background:#e4e4e4;"></div>
<div class="a" style="left:1349px;top:283px;width:1px;height:839px;background:#e4e4e4;"></div>
<div class="a" style="left:1425px;top:283px;width:1px;height:839px;background:#e4e4e4;"></div>
<div class="a" style="left:1484px;top:283px;width:1px;height:839px;background:#e4e4e4;"></div>
<div class="a" style="left:1581px;top:283px;width:1px;height:839px;background:#e4e4e4;"></div>
<div class="a" style="left:1657px;top:283px;width:1px;height:839px;background:#e4e4e4;"></div>
<div class="a" style="left:1747px;top:283px;width:1px;height:839px;background:#e4e4e4;"></div>
</body></html>
